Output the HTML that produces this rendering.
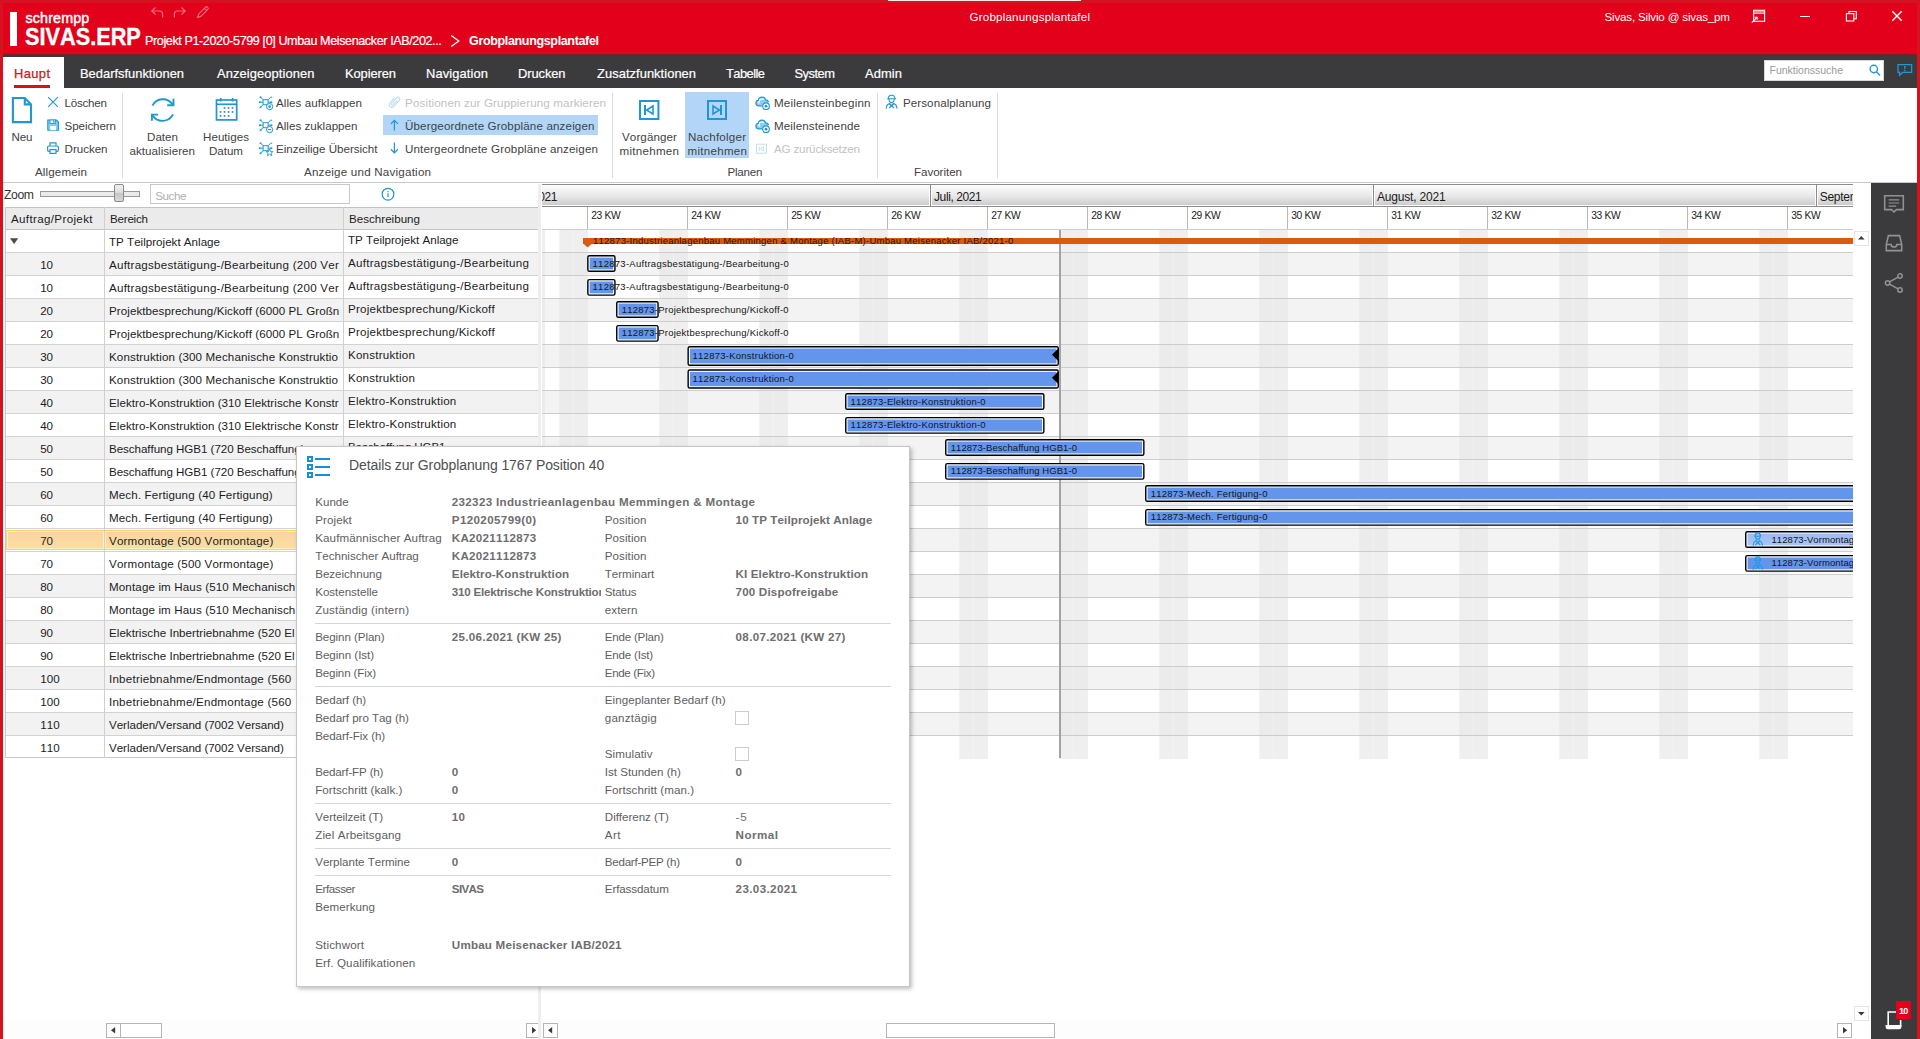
<!DOCTYPE html>
<html lang="de"><head><meta charset="utf-8"><title>Grobplanungsplantafel</title>
<style>
html,body{margin:0;padding:0;}
body{width:1920px;height:1039px;overflow:hidden;position:relative;background:#fff;font-family:"Liberation Sans",sans-serif;font-kerning:none;}
#app{position:absolute;left:0;top:0;width:1920px;height:1039px;overflow:hidden;}
#app div{position:absolute;box-sizing:border-box;}
#app svg{position:absolute;overflow:visible;}
.t{position:absolute;white-space:nowrap;display:block;}
</style></head><body><div id="app">
<div style="left:0px;top:0px;width:1920px;height:54px;background:#e2001a;"></div>
<div style="left:9.8px;top:12.2px;width:7.5px;height:33.5px;background:#fff;"></div>
<span class="t" style="left:25.60px;top:7px;font-size:14.3px;line-height:23px;color:#fff;letter-spacing:0.117px;-webkit-text-stroke:0.45px #fff;">schrempp</span>
<span class="t" style="left:24.60px;top:19px;font-size:23.3px;line-height:37px;color:#fff;font-weight:700;transform-origin:0 50%;transform:scaleX(0.9316);-webkit-text-stroke:0.35px #fff;">SIVAS.ERP</span>
<span class="t" style="left:145.00px;top:31px;font-size:12.6px;line-height:20px;color:#fff;letter-spacing:-0.404px;-webkit-text-stroke:0.2px #fff;">Projekt P1-2020-5799 [0] Umbau Meisenacker IAB/202...</span>
<svg style="left:449px;top:33px" width="14" height="16" viewBox="0 0 14 16" ><polyline points="2.2,2.5 9.8,8 2.2,13.5" fill="none" stroke="#fff" stroke-width="1.3"/></svg>
<span class="t" style="left:469.00px;top:31px;font-size:12.6px;line-height:20px;color:#fff;font-weight:700;letter-spacing:-0.392px;">Grobplanungsplantafel</span>
<svg style="left:150px;top:5px" width="62" height="15" viewBox="0 0 62 15" ><g fill="none" stroke="rgba(255,255,255,0.42)" stroke-width="1.2">
<path d="M5.5 2.5 L1.8 6 L5.5 9.5 M1.8 6 H9.5 Q12.6 6 12.6 9 V12.5"/>
<path d="M31.5 2.5 L35.2 6 L31.5 9.5 M35.2 6 H27.5 Q24.4 6 24.4 9 V12.5"/>
<path d="M47.6 12.4 L48.6 9.2 L55.6 2.2 Q56.6 1.2 57.7 2.3 Q58.8 3.4 57.8 4.4 L50.8 11.4 Z M54.4 3.4 L56.6 5.6"/>
</g></svg>
<span class="t" style="left:969.50px;top:7px;font-size:11.6px;line-height:19px;color:#fff;letter-spacing:0.191px;">Grobplanungsplantafel</span>
<span class="t" style="left:1604.50px;top:7px;font-size:11.6px;line-height:19px;color:#fff;letter-spacing:-0.182px;">Sivas, Silvio @ sivas_pm</span>
<svg style="left:1750px;top:8px" width="18" height="17" viewBox="0 0 18 17" ><g fill="none" stroke="#fff" stroke-width="1.1">
<rect x="3.6" y="2.3" width="11" height="11"/><path d="M3.6 5.2 H14.6" stroke-width="1"/><path d="M1.8 14.6 L7 9.4 M4.6 9.2 H7.2 V11.8"/></g>
<rect x="4.2" y="2.9" width="9.8" height="1.6" fill="#fff" fill-opacity="0.55"/></svg>
<div style="left:1800px;top:15.6px;width:10px;height:1.4px;background:#fff;"></div>
<svg style="left:1844px;top:9px" width="14" height="14" viewBox="0 0 14 14" ><g fill="none" stroke="#fff" stroke-width="1.1"><rect x="2.4" y="4.6" width="7.4" height="7.4"/><path d="M4.9 4.6 V2.5 H12.3 V9.8 H9.8"/></g></svg>
<svg style="left:1890px;top:9px" width="14" height="14" viewBox="0 0 14 14" ><path d="M2.3 2.3 L11.7 11.7 M11.7 2.3 L2.3 11.7" stroke="#fff" stroke-width="1.4" fill="none"/></svg>
<div style="left:0px;top:0px;width:3px;height:1039px;background:#d5121f;"></div>
<div style="left:1917px;top:0px;width:3px;height:1039px;background:#d5121f;"></div>
<div style="left:0px;top:0px;width:1920px;height:2.5px;background:#d5121f;"></div>
<div style="left:888px;top:0px;width:193px;height:1px;background:#fbe6e8;"></div>
<div style="left:3px;top:54px;width:1914px;height:34px;background:#3b3b3d;"></div>
<div style="left:3px;top:54px;width:1914px;height:1px;background:#74202c;"></div>
<div style="left:3px;top:57px;width:61px;height:31px;background:#fff;"></div>
<span class="t" style="left:14.00px;top:63px;font-size:12.9px;line-height:21px;color:#cf1322;letter-spacing:0.398px;-webkit-text-stroke:0.25px #cf1322;">Haupt</span>
<div style="left:14px;top:85px;width:36px;height:2.5px;background:#cf1322;"></div>
<span class="t" style="left:80.00px;top:63px;font-size:12.9px;line-height:21px;color:#fff;letter-spacing:0.005px;-webkit-text-stroke:0.2px #fff;">Bedarfsfunktionen</span>
<span class="t" style="left:217.00px;top:63px;font-size:12.9px;line-height:21px;color:#fff;letter-spacing:0.104px;-webkit-text-stroke:0.2px #fff;">Anzeigeoptionen</span>
<span class="t" style="left:345.00px;top:63px;font-size:12.9px;line-height:21px;color:#fff;letter-spacing:-0.087px;-webkit-text-stroke:0.2px #fff;">Kopieren</span>
<span class="t" style="left:426.00px;top:63px;font-size:12.9px;line-height:21px;color:#fff;letter-spacing:0.120px;-webkit-text-stroke:0.2px #fff;">Navigation</span>
<span class="t" style="left:518.00px;top:63px;font-size:12.9px;line-height:21px;color:#fff;letter-spacing:-0.083px;-webkit-text-stroke:0.2px #fff;">Drucken</span>
<span class="t" style="left:597.00px;top:63px;font-size:12.9px;line-height:21px;color:#fff;letter-spacing:0.055px;-webkit-text-stroke:0.2px #fff;">Zusatzfunktionen</span>
<span class="t" style="left:726.00px;top:63px;font-size:12.9px;line-height:21px;color:#fff;letter-spacing:-0.547px;-webkit-text-stroke:0.2px #fff;">Tabelle</span>
<span class="t" style="left:794.50px;top:63px;font-size:12.9px;line-height:21px;color:#fff;letter-spacing:-0.497px;-webkit-text-stroke:0.2px #fff;">System</span>
<span class="t" style="left:865.00px;top:63px;font-size:12.9px;line-height:21px;color:#fff;letter-spacing:0.113px;-webkit-text-stroke:0.2px #fff;">Admin</span>
<div style="left:1764px;top:60px;width:120px;height:20.5px;background:#fff;border:1px solid #d8d8d8;"></div>
<span class="t" style="left:1769.50px;top:62px;font-size:10.5px;line-height:17px;color:#9a9a9a;letter-spacing:-0.004px;">Funktionssuche</span>
<svg style="left:1868px;top:63px" width="14" height="14" viewBox="0 0 14 14" ><g fill="none" stroke="#1e97d4" stroke-width="1.4"><circle cx="5.8" cy="6" r="3.7"/><path d="M8.4 8.8 L12 12.4"/></g></svg>
<svg style="left:1896px;top:62px" width="18" height="16" viewBox="0 0 18 16" ><g fill="none" stroke="#1e97d4" stroke-width="1.3"><path d="M2 2.6 H15.6 V10.4 H6.6 L3.6 13.2 V10.4 H2 Z"/></g><rect x="8.1" y="4" width="1.4" height="3.2" fill="#1e97d4"/><rect x="8.1" y="8" width="1.4" height="1.3" fill="#1e97d4"/></svg>
<div style="left:3px;top:88px;width:1914px;height:94px;background:#fff;"></div>
<div style="left:3px;top:182px;width:1914px;height:1px;background:#c9c9c9;"></div>
<div style="left:122px;top:92.5px;width:1px;height:85px;background:#dadada;"></div>
<div style="left:612px;top:92.5px;width:1px;height:85px;background:#dadada;"></div>
<div style="left:877px;top:92.5px;width:1px;height:85px;background:#dadada;"></div>
<div style="left:997px;top:92.5px;width:1px;height:85px;background:#dadada;"></div>
<svg style="left:10px;top:95px" width="24" height="30" viewBox="0 0 24 30" ><g fill="none" stroke="#1e97d4" stroke-width="2.1" stroke-linejoin="miter"><path d="M2.9 3 H14.8 L21 9.4 V27.1 H2.9 Z"/><path d="M14.8 3 V9.4 H21"/></g></svg>
<span class="t" style="left:11.60px;top:127px;font-size:11.6px;line-height:19px;color:#424242;letter-spacing:-0.191px;">Neu</span>
<svg style="left:46px;top:95px" width="14" height="14" viewBox="0 0 14 14" ><path d="M2.2 2.2 L11.8 11.8 M11.8 2.2 L2.2 11.8" stroke="#1e97d4" stroke-width="1.1" fill="none"/></svg>
<span class="t" style="left:64.60px;top:93px;font-size:11.6px;line-height:19px;color:#424242;letter-spacing:-0.241px;">Löschen</span>
<svg style="left:46px;top:118px" width="14" height="14" viewBox="0 0 14 14" ><path d="M1.8 2 H10.4 L12.4 4 V12.2 H1.8 Z" fill="#8ccbee" stroke="#1e97d4" stroke-width="1.1"/>
<rect x="4" y="2" width="5.6" height="3.4" fill="#fff" stroke="#1e97d4" stroke-width="0.9"/><rect x="7.2" y="2.4" width="1.3" height="2.2" fill="#1e97d4"/>
<rect x="4.2" y="8" width="5.8" height="4.2" fill="#fff"/></svg>
<span class="t" style="left:64.60px;top:116px;font-size:11.6px;line-height:19px;color:#424242;letter-spacing:-0.102px;">Speichern</span>
<svg style="left:46px;top:141px" width="14" height="14" viewBox="0 0 14 14" ><g fill="none" stroke="#1e97d4" stroke-width="1.2"><path d="M4 5 V1.9 H10 V5"/><rect x="1.6" y="5" width="10.8" height="5.4" rx="1.3"/><rect x="4" y="8.6" width="6" height="3.8" fill="#fff"/></g></svg>
<span class="t" style="left:64.60px;top:139px;font-size:11.6px;line-height:19px;color:#424242;letter-spacing:-0.045px;">Drucken</span>
<span class="t" style="left:35.00px;top:162px;font-size:11.6px;line-height:19px;color:#424242;letter-spacing:0.135px;">Allgemein</span>
<svg style="left:149px;top:95px" width="28" height="30" viewBox="0 0 28 30" ><g fill="none" stroke="#1e97d4" stroke-width="1.9">
<path d="M3.4 10.7 A11.7 11.7 0 0 1 23.6 9.4"/><path d="M24.5 3.8 V10.3 H18.2"/>
<path d="M24 19.4 A11.8 11.8 0 0 1 3.6 20.5"/><path d="M2.9 25.8 V19.6 H9.2"/></g></svg>
<span class="t" style="left:147.00px;top:127px;font-size:11.6px;line-height:19px;color:#424242;letter-spacing:0.016px;">Daten</span>
<span class="t" style="left:129.50px;top:141px;font-size:11.6px;line-height:19px;color:#424242;letter-spacing:0.034px;">aktualisieren</span>
<svg style="left:214px;top:96px" width="26" height="27" viewBox="0 0 26 27" ><g fill="none" stroke="#1e97d4" stroke-width="1.7"><rect x="2.5" y="4" width="20.2" height="19.9"/><path d="M2.5 8.3 H22.7"/></g>
<g stroke="#1e97d4" stroke-width="1.7"><path d="M6.7 1.9 V5.4 M18.6 1.9 V5.4"/></g><rect x="9.70" y="11.10" width="1.7" height="1.7" fill="#3f86b3"/><rect x="13.70" y="11.10" width="1.7" height="1.7" fill="#3f86b3"/><rect x="17.70" y="11.10" width="1.7" height="1.7" fill="#3f86b3"/><rect x="5.70" y="15.10" width="1.7" height="1.7" fill="#3f86b3"/><rect x="9.70" y="15.10" width="1.7" height="1.7" fill="#3f86b3"/><rect x="13.70" y="15.10" width="1.7" height="1.7" fill="#3f86b3"/><rect x="17.70" y="15.10" width="1.7" height="1.7" fill="#3f86b3"/><rect x="5.70" y="19.10" width="1.7" height="1.7" fill="#3f86b3"/><rect x="9.70" y="19.10" width="1.7" height="1.7" fill="#3f86b3"/><rect x="13.70" y="19.10" width="1.7" height="1.7" fill="#3f86b3"/></svg>
<span class="t" style="left:203.00px;top:127px;font-size:11.6px;line-height:19px;color:#424242;letter-spacing:0.033px;">Heutiges</span>
<span class="t" style="left:209.00px;top:141px;font-size:11.6px;line-height:19px;color:#424242;letter-spacing:-0.039px;">Datum</span>
<svg style="left:258.6px;top:96px" width="15" height="15" viewBox="0 0 15 15" ><g fill="none" stroke="#1e97d4" stroke-width="1"><rect x="4.1" y="3.7" width="5" height="5"/>
<path d="M4.1 3.7 L1.6 1.2 M9.1 3.7 L11.6 1.2 M4.1 8.7 L1.6 11.2 M4.1 6.2 H0.8 M9.1 6.2 H12.4 M11.6 1.2 H13.2"/></g>
<g fill="#1e97d4"><rect x="0.7" y="0.4" width="1.7" height="1.7"/><rect x="0" y="5.4" width="1.7" height="1.7"/><rect x="0.7" y="10.4" width="1.7" height="1.7"/><rect x="11.6" y="5.4" width="1.7" height="1.7"/></g><circle cx="10.6" cy="10.6" r="3.1" fill="#fff" stroke="#1e97d4" stroke-width="1"/><circle cx="10.6" cy="10.6" r="1.3" fill="#1e97d4"/></svg>
<span class="t" style="left:276.00px;top:93px;font-size:11.6px;line-height:19px;color:#424242;letter-spacing:0.060px;">Alles aufklappen</span>
<svg style="left:258.6px;top:119px" width="15" height="15" viewBox="0 0 15 15" ><g fill="none" stroke="#1e97d4" stroke-width="1"><rect x="4.1" y="3.7" width="5" height="5"/>
<path d="M4.1 3.7 L1.6 1.2 M9.1 3.7 L11.6 1.2 M4.1 8.7 L1.6 11.2 M4.1 6.2 H0.8 M9.1 6.2 H12.4 M11.6 1.2 H13.2"/></g>
<g fill="#1e97d4"><rect x="0.7" y="0.4" width="1.7" height="1.7"/><rect x="0" y="5.4" width="1.7" height="1.7"/><rect x="0.7" y="10.4" width="1.7" height="1.7"/><rect x="11.6" y="5.4" width="1.7" height="1.7"/></g><circle cx="10.6" cy="10.6" r="3.1" fill="#fff" stroke="#1e97d4" stroke-width="1"/><path d="M9 10.6 H12.2" stroke="#1e97d4" stroke-width="1.1"/></svg>
<span class="t" style="left:276.00px;top:116px;font-size:11.6px;line-height:19px;color:#424242;letter-spacing:0.020px;">Alles zuklappen</span>
<svg style="left:258.6px;top:142px" width="15" height="15" viewBox="0 0 15 15" ><g fill="none" stroke="#1e97d4" stroke-width="1"><rect x="4.1" y="3.7" width="5" height="5"/>
<path d="M4.1 3.7 L1.6 1.2 M9.1 3.7 L11.6 1.2 M4.1 8.7 L1.6 11.2 M4.1 6.2 H0.8 M9.1 6.2 H12.4 M11.6 1.2 H13.2"/></g>
<g fill="#1e97d4"><rect x="0.7" y="0.4" width="1.7" height="1.7"/><rect x="0" y="5.4" width="1.7" height="1.7"/><rect x="0.7" y="10.4" width="1.7" height="1.7"/><rect x="11.6" y="5.4" width="1.7" height="1.7"/></g><path d="M10.6 7 L11.6 9.5 L14 9.6 L12.1 11.2 L12.8 13.8 L10.6 12.3 L8.4 13.8 L9.1 11.2 L7.2 9.6 L9.6 9.5 Z" fill="#fff" stroke="#1e97d4" stroke-width="0.9"/></svg>
<span class="t" style="left:276.00px;top:139px;font-size:11.6px;line-height:19px;color:#424242;letter-spacing:-0.017px;">Einzeilige Übersicht</span>
<svg style="left:387px;top:95px" width="14" height="14" viewBox="0 0 14 14" ><g transform="translate(7.2,7) rotate(42) translate(-3.5,-7.2)"><path d="M0.8 4 V10.6 A2.7 2.7 0 0 0 6.2 10.6 V2.6 A1.9 1.9 0 0 0 2.4 2.6 V10 A1.1 1.1 0 0 0 4.6 10 V4" fill="none" stroke="#b9dbf0" stroke-width="1"/></g></svg>
<span class="t" style="left:405.00px;top:93px;font-size:11.6px;line-height:19px;color:#c2c2c2;letter-spacing:0.146px;">Positionen zur Gruppierung markieren</span>
<div style="left:383px;top:115px;width:214.6px;height:20px;background:#b1d6f8;"></div>
<svg style="left:389px;top:118px" width="12" height="14" viewBox="0 0 12 14" ><path d="M5.4 12.6 V2.4 M1.9 5.9 L5.4 2.3 L8.9 5.9" fill="none" stroke="#1e97d4" stroke-width="1.25"/></svg>
<span class="t" style="left:405.00px;top:116px;font-size:11.6px;line-height:19px;color:#424242;letter-spacing:0.145px;">Übergeordnete Grobpläne anzeigen</span>
<svg style="left:389px;top:141px" width="12" height="14" viewBox="0 0 12 14" ><path d="M5.4 1.6 V11.8 M1.9 8.3 L5.4 11.9 L8.9 8.3" fill="none" stroke="#1e97d4" stroke-width="1.25"/></svg>
<span class="t" style="left:405.00px;top:139px;font-size:11.6px;line-height:19px;color:#424242;letter-spacing:0.149px;">Untergeordnete Grobpläne anzeigen</span>
<span class="t" style="left:304.00px;top:162px;font-size:11.6px;line-height:19px;color:#424242;letter-spacing:0.216px;">Anzeige und Navigation</span>
<svg style="left:637px;top:98px" width="24" height="24" viewBox="0 0 24 24" ><g fill="none" stroke="#1e97d4"><rect x="3" y="3" width="18.4" height="18" stroke-width="2"/><path d="M8 7 V17" stroke-width="2"/><path d="M16 8 L9.6 12 L16 16 Z" stroke-width="1.6"/></g></svg>
<span class="t" style="left:622.00px;top:127px;font-size:11.6px;line-height:19px;color:#424242;letter-spacing:0.105px;">Vorgänger</span>
<span class="t" style="left:619.50px;top:141px;font-size:11.6px;line-height:19px;color:#424242;letter-spacing:0.268px;">mitnehmen</span>
<div style="left:684.5px;top:92px;width:64.5px;height:66px;background:#b3d6f8;"></div>
<svg style="left:705px;top:98px" width="24" height="24" viewBox="0 0 24 24" ><g fill="none" stroke="#1e97d4"><rect x="3" y="3" width="18" height="18" stroke-width="2"/><path d="M16 7 V17" stroke-width="2"/><path d="M8 8 L14.4 12 L8 16 Z" stroke-width="1.6"/></g></svg>
<span class="t" style="left:688.00px;top:127px;font-size:11.6px;line-height:19px;color:#424242;letter-spacing:0.214px;">Nachfolger</span>
<span class="t" style="left:687.50px;top:141px;font-size:11.6px;line-height:19px;color:#424242;letter-spacing:0.268px;">mitnehmen</span>
<svg style="left:755px;top:96px" width="16" height="15" viewBox="0 0 16 15" ><path d="M8 9.8 H3.6 Q0.9 9.8 0.9 7 Q0.9 4.6 3.3 4.4 Q3.9 1.1 7 1.1 Q9.8 1.1 10.6 3.8 Q13.2 3.8 13.6 7 Z" fill="#8fcdf0"/><path d="M4 7.6 V5.6 Q4 3.2 6.4 3.2 H9" fill="none" stroke="#fff" stroke-width="1.3"/><g fill="none" stroke="#1e97d4" stroke-width="1.15"><path d="M7.2 9.8 H3.6 Q0.9 9.8 0.9 7 Q0.9 4.6 3.3 4.4 Q3.9 1.1 7 1.1 Q9.8 1.1 10.6 3.8 Q13 3.8 13.4 6"/><circle cx="11" cy="10.2" r="3.3" fill="#fff"/></g><circle cx="11" cy="10.2" r="1.4" fill="#1e97d4"/></svg>
<span class="t" style="left:774.00px;top:93px;font-size:11.6px;line-height:19px;color:#424242;letter-spacing:0.189px;">Meilensteinbeginn</span>
<svg style="left:755px;top:119px" width="16" height="15" viewBox="0 0 16 15" ><path d="M8 9.8 H3.6 Q0.9 9.8 0.9 7 Q0.9 4.6 3.3 4.4 Q3.9 1.1 7 1.1 Q9.8 1.1 10.6 3.8 Q13.2 3.8 13.6 7 Z" fill="#8fcdf0"/><path d="M4 7.6 V5.6 Q4 3.2 6.4 3.2 H9" fill="none" stroke="#fff" stroke-width="1.3"/><g fill="none" stroke="#1e97d4" stroke-width="1.15"><path d="M7.2 9.8 H3.6 Q0.9 9.8 0.9 7 Q0.9 4.6 3.3 4.4 Q3.9 1.1 7 1.1 Q9.8 1.1 10.6 3.8 Q13 3.8 13.4 6"/><circle cx="11" cy="10.2" r="3.3" fill="#fff"/></g><circle cx="11" cy="10.2" r="1.4" fill="#1e97d4"/></svg>
<span class="t" style="left:774.00px;top:116px;font-size:11.6px;line-height:19px;color:#424242;letter-spacing:0.112px;">Meilensteinende</span>
<svg style="left:755px;top:143px" width="13" height="12" viewBox="0 0 13 12" ><g fill="none" stroke="#c3def0" stroke-width="1"><rect x="1.5" y="1.2" width="10" height="9"/><path d="M4.2 3.6 V8 M8.6 3.6 L5.4 5.8 L8.6 8 Z"/></g></svg>
<span class="t" style="left:774.00px;top:139px;font-size:11.6px;line-height:19px;color:#c2c2c2;letter-spacing:-0.163px;">AG zurücksetzen</span>
<span class="t" style="left:727.50px;top:162px;font-size:11.6px;line-height:19px;color:#424242;letter-spacing:-0.222px;">Planen</span>
<svg style="left:885px;top:94px" width="14" height="16" viewBox="0 0 14 16" ><g fill="none" stroke="#1e97d4" stroke-width="1.1"><path d="M3.3 4.6 Q3.3 1.2 6.6 1.2 Q9.9 1.2 9.9 4.6"/><path d="M2.2 4.8 H11"/><path d="M4 5 Q4 8.6 6.6 8.6 Q9.2 8.6 9.2 5"/><path d="M1.2 14.6 Q1.4 10.4 4.6 9.6 L6.6 12 L8.6 9.6 Q11.8 10.4 12 14.6"/><path d="M4.4 9.4 L9 14 M8.8 9.4 L4.2 14"/></g></svg>
<span class="t" style="left:903.00px;top:93px;font-size:11.6px;line-height:19px;color:#424242;letter-spacing:0.069px;">Personalplanung</span>
<span class="t" style="left:914.00px;top:162px;font-size:11.6px;line-height:19px;color:#424242;letter-spacing:-0.041px;">Favoriten</span>
<span class="t" style="left:4.00px;top:185px;font-size:12.2px;line-height:20px;color:#333;letter-spacing:-0.385px;">Zoom</span>
<div style="left:40px;top:191px;width:100px;height:6px;background:#ebebeb;border:1px solid #9a9a9a;"></div>
<div style="left:114px;top:184px;width:10px;height:18px;border:1px solid #8c8c8c;border-radius:2px;background:linear-gradient(180deg,#f2f2f2 0%,#dcdcdc 48%,#c6c6c6 52%,#d9d9d9 100%);"></div>
<div style="left:150px;top:184px;width:199.5px;height:19.5px;background:#fff;border:1px solid #c8c8c8;"></div>
<span class="t" style="left:155.30px;top:186px;font-size:11.7px;line-height:19px;color:#b0b0b0;letter-spacing:-0.485px;">Suche</span>
<svg style="left:380px;top:186px" width="16" height="16" viewBox="0 0 16 16" ><circle cx="8" cy="8.2" r="5.9" fill="none" stroke="#1e97d4" stroke-width="1.15"/><rect x="7.45" y="7.2" width="1.15" height="4" fill="#1e97d4"/><rect x="7.45" y="5" width="1.15" height="1.2" fill="#1e97d4"/></svg>
<div style="left:5px;top:207px;width:533px;height:23px;background:#ebebeb;border-top:1px solid #c2c2c2;border-bottom:1px solid #c6c6c6;"></div>
<span class="t" style="left:11.00px;top:209px;font-size:11.6px;line-height:19px;color:#1c1c1c;letter-spacing:0.344px;">Auftrag/Projekt</span>
<span class="t" style="left:110.00px;top:209px;font-size:11.6px;line-height:19px;color:#1c1c1c;letter-spacing:-0.219px;">Bereich</span>
<span class="t" style="left:349.00px;top:209px;font-size:11.6px;line-height:19px;color:#1c1c1c;letter-spacing:0.009px;">Beschreibung</span>
<div style="left:5px;top:230px;width:533px;height:23px;background:#fff;border-bottom:1px solid #d2d2d2;"></div>
<span class="t" style="left:109.00px;top:232px;font-size:11.6px;line-height:19px;color:#1c1c1c;letter-spacing:0.008px;width:230.5px;overflow:hidden;">TP Teilprojekt Anlage</span>
<span class="t" style="left:348.00px;top:230px;font-size:11.6px;line-height:19px;color:#1c1c1c;letter-spacing:-0.017px;width:188px;overflow:hidden;">TP Teilprojekt Anlage</span>
<div style="left:5px;top:253px;width:533px;height:23px;background:#f2f2f2;border-bottom:1px solid #d2d2d2;"></div>
<span class="t" style="left:40.30px;top:255px;font-size:11.6px;line-height:19px;color:#1c1c1c;letter-spacing:-0.306px;">10</span>
<span class="t" style="left:109.00px;top:255px;font-size:11.6px;line-height:19px;color:#1c1c1c;letter-spacing:0.234px;width:230.5px;overflow:hidden;">Auftragsbestätigung-/Bearbeitung (200 Ver</span>
<span class="t" style="left:348.00px;top:253px;font-size:11.6px;line-height:19px;color:#1c1c1c;letter-spacing:0.266px;width:188px;overflow:hidden;">Auftragsbestätigung-/Bearbeitung</span>
<div style="left:5px;top:276px;width:533px;height:23px;background:#fff;border-bottom:1px solid #d2d2d2;"></div>
<span class="t" style="left:40.30px;top:278px;font-size:11.6px;line-height:19px;color:#1c1c1c;letter-spacing:-0.306px;">10</span>
<span class="t" style="left:109.00px;top:278px;font-size:11.6px;line-height:19px;color:#1c1c1c;letter-spacing:0.234px;width:230.5px;overflow:hidden;">Auftragsbestätigung-/Bearbeitung (200 Ver</span>
<span class="t" style="left:348.00px;top:276px;font-size:11.6px;line-height:19px;color:#1c1c1c;letter-spacing:0.266px;width:188px;overflow:hidden;">Auftragsbestätigung-/Bearbeitung</span>
<div style="left:5px;top:299px;width:533px;height:23px;background:#f2f2f2;border-bottom:1px solid #d2d2d2;"></div>
<span class="t" style="left:40.30px;top:301px;font-size:11.6px;line-height:19px;color:#1c1c1c;letter-spacing:-0.306px;">20</span>
<span class="t" style="left:109.00px;top:301px;font-size:11.6px;line-height:19px;color:#1c1c1c;letter-spacing:0.070px;width:230.5px;overflow:hidden;">Projektbesprechung/Kickoff (6000 PL Großn</span>
<span class="t" style="left:348.00px;top:299px;font-size:11.6px;line-height:19px;color:#1c1c1c;letter-spacing:0.226px;width:188px;overflow:hidden;">Projektbesprechung/Kickoff</span>
<div style="left:5px;top:322px;width:533px;height:23px;background:#fff;border-bottom:1px solid #d2d2d2;"></div>
<span class="t" style="left:40.30px;top:324px;font-size:11.6px;line-height:19px;color:#1c1c1c;letter-spacing:-0.306px;">20</span>
<span class="t" style="left:109.00px;top:324px;font-size:11.6px;line-height:19px;color:#1c1c1c;letter-spacing:0.070px;width:230.5px;overflow:hidden;">Projektbesprechung/Kickoff (6000 PL Großn</span>
<span class="t" style="left:348.00px;top:322px;font-size:11.6px;line-height:19px;color:#1c1c1c;letter-spacing:0.226px;width:188px;overflow:hidden;">Projektbesprechung/Kickoff</span>
<div style="left:5px;top:345px;width:533px;height:23px;background:#f2f2f2;border-bottom:1px solid #d2d2d2;"></div>
<span class="t" style="left:40.30px;top:347px;font-size:11.6px;line-height:19px;color:#1c1c1c;letter-spacing:-0.306px;">30</span>
<span class="t" style="left:109.00px;top:347px;font-size:11.6px;line-height:19px;color:#1c1c1c;letter-spacing:0.134px;width:230.5px;overflow:hidden;">Konstruktion (300 Mechanische Konstruktio</span>
<span class="t" style="left:348.00px;top:345px;font-size:11.6px;line-height:19px;color:#1c1c1c;letter-spacing:0.222px;width:188px;overflow:hidden;">Konstruktion</span>
<div style="left:5px;top:368px;width:533px;height:23px;background:#fff;border-bottom:1px solid #d2d2d2;"></div>
<span class="t" style="left:40.30px;top:370px;font-size:11.6px;line-height:19px;color:#1c1c1c;letter-spacing:-0.306px;">30</span>
<span class="t" style="left:109.00px;top:370px;font-size:11.6px;line-height:19px;color:#1c1c1c;letter-spacing:0.134px;width:230.5px;overflow:hidden;">Konstruktion (300 Mechanische Konstruktio</span>
<span class="t" style="left:348.00px;top:368px;font-size:11.6px;line-height:19px;color:#1c1c1c;letter-spacing:0.222px;width:188px;overflow:hidden;">Konstruktion</span>
<div style="left:5px;top:391px;width:533px;height:23px;background:#f2f2f2;border-bottom:1px solid #d2d2d2;"></div>
<span class="t" style="left:40.30px;top:393px;font-size:11.6px;line-height:19px;color:#1c1c1c;letter-spacing:-0.306px;">40</span>
<span class="t" style="left:109.00px;top:393px;font-size:11.6px;line-height:19px;color:#1c1c1c;letter-spacing:0.050px;width:230.5px;overflow:hidden;">Elektro-Konstruktion (310 Elektrische Konstr</span>
<span class="t" style="left:348.00px;top:391px;font-size:11.6px;line-height:19px;color:#1c1c1c;letter-spacing:0.206px;width:188px;overflow:hidden;">Elektro-Konstruktion</span>
<div style="left:5px;top:414px;width:533px;height:23px;background:#fff;border-bottom:1px solid #d2d2d2;"></div>
<span class="t" style="left:40.30px;top:416px;font-size:11.6px;line-height:19px;color:#1c1c1c;letter-spacing:-0.306px;">40</span>
<span class="t" style="left:109.00px;top:416px;font-size:11.6px;line-height:19px;color:#1c1c1c;letter-spacing:0.050px;width:230.5px;overflow:hidden;">Elektro-Konstruktion (310 Elektrische Konstr</span>
<span class="t" style="left:348.00px;top:414px;font-size:11.6px;line-height:19px;color:#1c1c1c;letter-spacing:0.206px;width:188px;overflow:hidden;">Elektro-Konstruktion</span>
<div style="left:5px;top:437px;width:533px;height:23px;background:#f2f2f2;border-bottom:1px solid #d2d2d2;"></div>
<span class="t" style="left:40.30px;top:439px;font-size:11.6px;line-height:19px;color:#1c1c1c;letter-spacing:-0.306px;">50</span>
<span class="t" style="left:109.00px;top:439px;font-size:11.6px;line-height:19px;color:#1c1c1c;letter-spacing:-0.052px;width:230.5px;overflow:hidden;">Beschaffung HGB1 (720 Beschaffung)</span>
<span class="t" style="left:348.00px;top:437px;font-size:11.6px;line-height:19px;color:#1c1c1c;letter-spacing:-0.117px;width:188px;overflow:hidden;">Beschaffung HGB1</span>
<div style="left:5px;top:460px;width:533px;height:23px;background:#fff;border-bottom:1px solid #d2d2d2;"></div>
<span class="t" style="left:40.30px;top:462px;font-size:11.6px;line-height:19px;color:#1c1c1c;letter-spacing:-0.306px;">50</span>
<span class="t" style="left:109.00px;top:462px;font-size:11.6px;line-height:19px;color:#1c1c1c;letter-spacing:-0.052px;width:230.5px;overflow:hidden;">Beschaffung HGB1 (720 Beschaffung)</span>
<span class="t" style="left:348.00px;top:460px;font-size:11.6px;line-height:19px;color:#1c1c1c;letter-spacing:-0.117px;width:188px;overflow:hidden;">Beschaffung HGB1</span>
<div style="left:5px;top:483px;width:533px;height:23px;background:#f2f2f2;border-bottom:1px solid #d2d2d2;"></div>
<span class="t" style="left:40.30px;top:485px;font-size:11.6px;line-height:19px;color:#1c1c1c;letter-spacing:-0.306px;">60</span>
<span class="t" style="left:109.00px;top:485px;font-size:11.6px;line-height:19px;color:#1c1c1c;letter-spacing:0.134px;width:230.5px;overflow:hidden;">Mech. Fertigung (40 Fertigung)</span>
<span class="t" style="left:348.00px;top:483px;font-size:11.6px;line-height:19px;color:#1c1c1c;letter-spacing:-0.270px;width:188px;overflow:hidden;">Mech. Fertigung</span>
<div style="left:5px;top:506px;width:533px;height:23px;background:#fff;border-bottom:1px solid #d2d2d2;"></div>
<span class="t" style="left:40.30px;top:508px;font-size:11.6px;line-height:19px;color:#1c1c1c;letter-spacing:-0.306px;">60</span>
<span class="t" style="left:109.00px;top:508px;font-size:11.6px;line-height:19px;color:#1c1c1c;letter-spacing:0.134px;width:230.5px;overflow:hidden;">Mech. Fertigung (40 Fertigung)</span>
<span class="t" style="left:348.00px;top:506px;font-size:11.6px;line-height:19px;color:#1c1c1c;letter-spacing:-0.270px;width:188px;overflow:hidden;">Mech. Fertigung</span>
<div style="left:5px;top:529px;width:533px;height:23px;background:#fff;border-bottom:1px solid #d2d2d2;"></div>
<div style="left:6px;top:530px;width:99px;height:20px;background:linear-gradient(180deg,#fbd2a2,#fadf9f);border:1px solid #f1d56c;box-shadow:inset 0 0 0 1px rgba(255,244,200,0.75);"></div>
<div style="left:104px;top:530px;width:240px;height:20px;background:linear-gradient(180deg,#fbd2a2,#fadf9f);border:1px solid #f1d56c;box-shadow:inset 0 0 0 1px rgba(255,244,200,0.75);"></div>
<div style="left:343px;top:530px;width:195px;height:20px;background:linear-gradient(180deg,#fbd2a2,#fadf9f);border:1px solid #f1d56c;box-shadow:inset 0 0 0 1px rgba(255,244,200,0.75);"></div>
<span class="t" style="left:40.30px;top:531px;font-size:11.6px;line-height:19px;color:#1c1c1c;letter-spacing:-0.306px;">70</span>
<span class="t" style="left:109.00px;top:531px;font-size:11.6px;line-height:19px;color:#1c1c1c;letter-spacing:0.172px;width:230.5px;overflow:hidden;">Vormontage (500 Vormontage)</span>
<span class="t" style="left:348.00px;top:529px;font-size:11.6px;line-height:19px;color:#1c1c1c;letter-spacing:-0.270px;width:188px;overflow:hidden;">Vormontage</span>
<div style="left:5px;top:552px;width:533px;height:23px;background:#fff;border-bottom:1px solid #d2d2d2;"></div>
<span class="t" style="left:40.30px;top:554px;font-size:11.6px;line-height:19px;color:#1c1c1c;letter-spacing:-0.306px;">70</span>
<span class="t" style="left:109.00px;top:554px;font-size:11.6px;line-height:19px;color:#1c1c1c;letter-spacing:0.172px;width:230.5px;overflow:hidden;">Vormontage (500 Vormontage)</span>
<span class="t" style="left:348.00px;top:552px;font-size:11.6px;line-height:19px;color:#1c1c1c;letter-spacing:-0.270px;width:188px;overflow:hidden;">Vormontage</span>
<div style="left:5px;top:575px;width:533px;height:23px;background:#f2f2f2;border-bottom:1px solid #d2d2d2;"></div>
<span class="t" style="left:40.30px;top:577px;font-size:11.6px;line-height:19px;color:#1c1c1c;letter-spacing:-0.306px;">80</span>
<span class="t" style="left:109.00px;top:577px;font-size:11.6px;line-height:19px;color:#1c1c1c;letter-spacing:0.131px;width:230.5px;overflow:hidden;">Montage im Haus (510 Mechanisch</span>
<span class="t" style="left:348.00px;top:575px;font-size:11.6px;line-height:19px;color:#1c1c1c;letter-spacing:-0.270px;width:188px;overflow:hidden;">Montage im Haus</span>
<div style="left:5px;top:598px;width:533px;height:23px;background:#fff;border-bottom:1px solid #d2d2d2;"></div>
<span class="t" style="left:40.30px;top:600px;font-size:11.6px;line-height:19px;color:#1c1c1c;letter-spacing:-0.306px;">80</span>
<span class="t" style="left:109.00px;top:600px;font-size:11.6px;line-height:19px;color:#1c1c1c;letter-spacing:0.131px;width:230.5px;overflow:hidden;">Montage im Haus (510 Mechanisch</span>
<span class="t" style="left:348.00px;top:598px;font-size:11.6px;line-height:19px;color:#1c1c1c;letter-spacing:-0.270px;width:188px;overflow:hidden;">Montage im Haus</span>
<div style="left:5px;top:621px;width:533px;height:23px;background:#f2f2f2;border-bottom:1px solid #d2d2d2;"></div>
<span class="t" style="left:40.30px;top:623px;font-size:11.6px;line-height:19px;color:#1c1c1c;letter-spacing:-0.306px;">90</span>
<span class="t" style="left:109.00px;top:623px;font-size:11.6px;line-height:19px;color:#1c1c1c;letter-spacing:0.038px;width:230.5px;overflow:hidden;">Elektrische Inbertriebnahme (520 El</span>
<span class="t" style="left:348.00px;top:621px;font-size:11.6px;line-height:19px;color:#1c1c1c;letter-spacing:-0.270px;width:188px;overflow:hidden;">Elektrische Inbertriebnahme</span>
<div style="left:5px;top:644px;width:533px;height:23px;background:#fff;border-bottom:1px solid #d2d2d2;"></div>
<span class="t" style="left:40.30px;top:646px;font-size:11.6px;line-height:19px;color:#1c1c1c;letter-spacing:-0.306px;">90</span>
<span class="t" style="left:109.00px;top:646px;font-size:11.6px;line-height:19px;color:#1c1c1c;letter-spacing:0.038px;width:230.5px;overflow:hidden;">Elektrische Inbertriebnahme (520 El</span>
<span class="t" style="left:348.00px;top:644px;font-size:11.6px;line-height:19px;color:#1c1c1c;letter-spacing:-0.270px;width:188px;overflow:hidden;">Elektrische Inbertriebnahme</span>
<div style="left:5px;top:667px;width:533px;height:23px;background:#f2f2f2;border-bottom:1px solid #d2d2d2;"></div>
<span class="t" style="left:40.30px;top:669px;font-size:11.6px;line-height:19px;color:#1c1c1c;letter-spacing:-0.022px;">100</span>
<span class="t" style="left:109.00px;top:669px;font-size:11.6px;line-height:19px;color:#1c1c1c;letter-spacing:0.218px;width:230.5px;overflow:hidden;">Inbetriebnahme/Endmontage (560</span>
<span class="t" style="left:348.00px;top:667px;font-size:11.6px;line-height:19px;color:#1c1c1c;letter-spacing:-0.270px;width:188px;overflow:hidden;">Inbetriebnahme/Endmontage</span>
<div style="left:5px;top:690px;width:533px;height:23px;background:#fff;border-bottom:1px solid #d2d2d2;"></div>
<span class="t" style="left:40.30px;top:692px;font-size:11.6px;line-height:19px;color:#1c1c1c;letter-spacing:-0.022px;">100</span>
<span class="t" style="left:109.00px;top:692px;font-size:11.6px;line-height:19px;color:#1c1c1c;letter-spacing:0.218px;width:230.5px;overflow:hidden;">Inbetriebnahme/Endmontage (560</span>
<span class="t" style="left:348.00px;top:690px;font-size:11.6px;line-height:19px;color:#1c1c1c;letter-spacing:-0.270px;width:188px;overflow:hidden;">Inbetriebnahme/Endmontage</span>
<div style="left:5px;top:713px;width:533px;height:23px;background:#f2f2f2;border-bottom:1px solid #d2d2d2;"></div>
<span class="t" style="left:40.30px;top:715px;font-size:11.6px;line-height:19px;color:#1c1c1c;letter-spacing:-0.022px;">110</span>
<span class="t" style="left:109.00px;top:715px;font-size:11.6px;line-height:19px;color:#1c1c1c;letter-spacing:-0.038px;width:230.5px;overflow:hidden;">Verladen/Versand (7002 Versand)</span>
<span class="t" style="left:348.00px;top:713px;font-size:11.6px;line-height:19px;color:#1c1c1c;letter-spacing:-0.270px;width:188px;overflow:hidden;">Verladen/Versand</span>
<div style="left:5px;top:736px;width:533px;height:22px;background:#fff;border-bottom:1px solid #c8c8c8;"></div>
<span class="t" style="left:40.30px;top:738px;font-size:11.6px;line-height:19px;color:#1c1c1c;letter-spacing:-0.022px;">110</span>
<span class="t" style="left:109.00px;top:738px;font-size:11.6px;line-height:19px;color:#1c1c1c;letter-spacing:-0.038px;width:230.5px;overflow:hidden;">Verladen/Versand (7002 Versand)</span>
<span class="t" style="left:348.00px;top:736px;font-size:11.6px;line-height:19px;color:#1c1c1c;letter-spacing:-0.270px;width:188px;overflow:hidden;">Verladen/Versand</span>
<svg style="left:8px;top:236px" width="12" height="10" viewBox="0 0 12 10" ><path d="M2 2.2 H10.2 L6.1 8 Z" fill="#4a4a4a"/></svg>
<div style="left:5px;top:207px;width:1px;height:551px;background:#cbcbcb;"></div>
<div style="left:104px;top:207px;width:1px;height:551px;background:#d0d0d0;"></div>
<div style="left:343px;top:207px;width:1px;height:551px;background:#d0d0d0;"></div>
<div style="left:538px;top:184px;width:3px;height:855px;background:#eeeeee;"></div>
<svg style="left:0;top:0" width="1920" height="800" viewBox="0 0 1920 800"><defs><clipPath id="gc"><rect x="542" y="183" width="1311" height="600"/></clipPath><linearGradient id="mh" x1="0" y1="0" x2="0" y2="1"><stop offset="0" stop-color="#fbfbfb"/><stop offset="0.5" stop-color="#e9e9e9"/><stop offset="1" stop-color="#cdcdcd"/></linearGradient><linearGradient id="selbar" x1="0" y1="0" x2="0" y2="1"><stop offset="0" stop-color="#9dbcf3"/><stop offset="1" stop-color="#a9c4f5"/></linearGradient></defs><g clip-path="url(#gc)"><rect x="542" y="252" width="1311" height="23" fill="#f3f3f3"/><rect x="542" y="298" width="1311" height="23" fill="#f3f3f3"/><rect x="542" y="344" width="1311" height="23" fill="#f3f3f3"/><rect x="542" y="390" width="1311" height="23" fill="#f3f3f3"/><rect x="542" y="436" width="1311" height="23" fill="#f3f3f3"/><rect x="542" y="482" width="1311" height="23" fill="#f3f3f3"/><rect x="542" y="528" width="1311" height="23" fill="#f3f3f3"/><rect x="542" y="574" width="1311" height="23" fill="#f3f3f3"/><rect x="542" y="620" width="1311" height="23" fill="#f3f3f3"/><rect x="542" y="666" width="1311" height="23" fill="#f3f3f3"/><rect x="542" y="712" width="1311" height="23" fill="#f3f3f3"/><rect x="542.00" y="230" width="3.04" height="23" fill="#efefef"/><rect x="542.00" y="253" width="3.04" height="23" fill="#ebebeb"/><rect x="542.00" y="276" width="3.04" height="23" fill="#efefef"/><rect x="542.00" y="299" width="3.04" height="23" fill="#ebebeb"/><rect x="542.00" y="322" width="3.04" height="23" fill="#efefef"/><rect x="542.00" y="345" width="3.04" height="23" fill="#ebebeb"/><rect x="542.00" y="368" width="3.04" height="23" fill="#efefef"/><rect x="542.00" y="391" width="3.04" height="23" fill="#ebebeb"/><rect x="542.00" y="414" width="3.04" height="23" fill="#efefef"/><rect x="542.00" y="437" width="3.04" height="23" fill="#ebebeb"/><rect x="542.00" y="460" width="3.04" height="23" fill="#efefef"/><rect x="542.00" y="483" width="3.04" height="23" fill="#ebebeb"/><rect x="542.00" y="506" width="3.04" height="23" fill="#efefef"/><rect x="542.00" y="529" width="3.04" height="23" fill="#ebebeb"/><rect x="542.00" y="552" width="3.04" height="23" fill="#efefef"/><rect x="542.00" y="575" width="3.04" height="23" fill="#ebebeb"/><rect x="542.00" y="598" width="3.04" height="23" fill="#efefef"/><rect x="542.00" y="621" width="3.04" height="23" fill="#ebebeb"/><rect x="542.00" y="644" width="3.04" height="23" fill="#efefef"/><rect x="542.00" y="667" width="3.04" height="23" fill="#ebebeb"/><rect x="542.00" y="690" width="3.04" height="23" fill="#efefef"/><rect x="542.00" y="713" width="3.04" height="23" fill="#ebebeb"/><rect x="542.00" y="736" width="3.04" height="23" fill="#efefef"/><rect x="559.33" y="230" width="28.57" height="23" fill="#efefef"/><rect x="559.33" y="253" width="28.57" height="23" fill="#ebebeb"/><rect x="559.33" y="276" width="28.57" height="23" fill="#efefef"/><rect x="559.33" y="299" width="28.57" height="23" fill="#ebebeb"/><rect x="559.33" y="322" width="28.57" height="23" fill="#efefef"/><rect x="559.33" y="345" width="28.57" height="23" fill="#ebebeb"/><rect x="559.33" y="368" width="28.57" height="23" fill="#efefef"/><rect x="559.33" y="391" width="28.57" height="23" fill="#ebebeb"/><rect x="559.33" y="414" width="28.57" height="23" fill="#efefef"/><rect x="559.33" y="437" width="28.57" height="23" fill="#ebebeb"/><rect x="559.33" y="460" width="28.57" height="23" fill="#efefef"/><rect x="559.33" y="483" width="28.57" height="23" fill="#ebebeb"/><rect x="559.33" y="506" width="28.57" height="23" fill="#efefef"/><rect x="559.33" y="529" width="28.57" height="23" fill="#ebebeb"/><rect x="559.33" y="552" width="28.57" height="23" fill="#efefef"/><rect x="559.33" y="575" width="28.57" height="23" fill="#ebebeb"/><rect x="559.33" y="598" width="28.57" height="23" fill="#efefef"/><rect x="559.33" y="621" width="28.57" height="23" fill="#ebebeb"/><rect x="559.33" y="644" width="28.57" height="23" fill="#efefef"/><rect x="559.33" y="667" width="28.57" height="23" fill="#ebebeb"/><rect x="559.33" y="690" width="28.57" height="23" fill="#efefef"/><rect x="559.33" y="713" width="28.57" height="23" fill="#ebebeb"/><rect x="559.33" y="736" width="28.57" height="23" fill="#efefef"/><rect x="573.11" y="230" width="1" height="528" fill="#fff" fill-opacity="0.3"/><rect x="659.33" y="230" width="28.57" height="23" fill="#efefef"/><rect x="659.33" y="253" width="28.57" height="23" fill="#ebebeb"/><rect x="659.33" y="276" width="28.57" height="23" fill="#efefef"/><rect x="659.33" y="299" width="28.57" height="23" fill="#ebebeb"/><rect x="659.33" y="322" width="28.57" height="23" fill="#efefef"/><rect x="659.33" y="345" width="28.57" height="23" fill="#ebebeb"/><rect x="659.33" y="368" width="28.57" height="23" fill="#efefef"/><rect x="659.33" y="391" width="28.57" height="23" fill="#ebebeb"/><rect x="659.33" y="414" width="28.57" height="23" fill="#efefef"/><rect x="659.33" y="437" width="28.57" height="23" fill="#ebebeb"/><rect x="659.33" y="460" width="28.57" height="23" fill="#efefef"/><rect x="659.33" y="483" width="28.57" height="23" fill="#ebebeb"/><rect x="659.33" y="506" width="28.57" height="23" fill="#efefef"/><rect x="659.33" y="529" width="28.57" height="23" fill="#ebebeb"/><rect x="659.33" y="552" width="28.57" height="23" fill="#efefef"/><rect x="659.33" y="575" width="28.57" height="23" fill="#ebebeb"/><rect x="659.33" y="598" width="28.57" height="23" fill="#efefef"/><rect x="659.33" y="621" width="28.57" height="23" fill="#ebebeb"/><rect x="659.33" y="644" width="28.57" height="23" fill="#efefef"/><rect x="659.33" y="667" width="28.57" height="23" fill="#ebebeb"/><rect x="659.33" y="690" width="28.57" height="23" fill="#efefef"/><rect x="659.33" y="713" width="28.57" height="23" fill="#ebebeb"/><rect x="659.33" y="736" width="28.57" height="23" fill="#efefef"/><rect x="673.11" y="230" width="1" height="528" fill="#fff" fill-opacity="0.3"/><rect x="759.33" y="230" width="28.57" height="23" fill="#efefef"/><rect x="759.33" y="253" width="28.57" height="23" fill="#ebebeb"/><rect x="759.33" y="276" width="28.57" height="23" fill="#efefef"/><rect x="759.33" y="299" width="28.57" height="23" fill="#ebebeb"/><rect x="759.33" y="322" width="28.57" height="23" fill="#efefef"/><rect x="759.33" y="345" width="28.57" height="23" fill="#ebebeb"/><rect x="759.33" y="368" width="28.57" height="23" fill="#efefef"/><rect x="759.33" y="391" width="28.57" height="23" fill="#ebebeb"/><rect x="759.33" y="414" width="28.57" height="23" fill="#efefef"/><rect x="759.33" y="437" width="28.57" height="23" fill="#ebebeb"/><rect x="759.33" y="460" width="28.57" height="23" fill="#efefef"/><rect x="759.33" y="483" width="28.57" height="23" fill="#ebebeb"/><rect x="759.33" y="506" width="28.57" height="23" fill="#efefef"/><rect x="759.33" y="529" width="28.57" height="23" fill="#ebebeb"/><rect x="759.33" y="552" width="28.57" height="23" fill="#efefef"/><rect x="759.33" y="575" width="28.57" height="23" fill="#ebebeb"/><rect x="759.33" y="598" width="28.57" height="23" fill="#efefef"/><rect x="759.33" y="621" width="28.57" height="23" fill="#ebebeb"/><rect x="759.33" y="644" width="28.57" height="23" fill="#efefef"/><rect x="759.33" y="667" width="28.57" height="23" fill="#ebebeb"/><rect x="759.33" y="690" width="28.57" height="23" fill="#efefef"/><rect x="759.33" y="713" width="28.57" height="23" fill="#ebebeb"/><rect x="759.33" y="736" width="28.57" height="23" fill="#efefef"/><rect x="773.11" y="230" width="1" height="528" fill="#fff" fill-opacity="0.3"/><rect x="859.33" y="230" width="28.57" height="23" fill="#efefef"/><rect x="859.33" y="253" width="28.57" height="23" fill="#ebebeb"/><rect x="859.33" y="276" width="28.57" height="23" fill="#efefef"/><rect x="859.33" y="299" width="28.57" height="23" fill="#ebebeb"/><rect x="859.33" y="322" width="28.57" height="23" fill="#efefef"/><rect x="859.33" y="345" width="28.57" height="23" fill="#ebebeb"/><rect x="859.33" y="368" width="28.57" height="23" fill="#efefef"/><rect x="859.33" y="391" width="28.57" height="23" fill="#ebebeb"/><rect x="859.33" y="414" width="28.57" height="23" fill="#efefef"/><rect x="859.33" y="437" width="28.57" height="23" fill="#ebebeb"/><rect x="859.33" y="460" width="28.57" height="23" fill="#efefef"/><rect x="859.33" y="483" width="28.57" height="23" fill="#ebebeb"/><rect x="859.33" y="506" width="28.57" height="23" fill="#efefef"/><rect x="859.33" y="529" width="28.57" height="23" fill="#ebebeb"/><rect x="859.33" y="552" width="28.57" height="23" fill="#efefef"/><rect x="859.33" y="575" width="28.57" height="23" fill="#ebebeb"/><rect x="859.33" y="598" width="28.57" height="23" fill="#efefef"/><rect x="859.33" y="621" width="28.57" height="23" fill="#ebebeb"/><rect x="859.33" y="644" width="28.57" height="23" fill="#efefef"/><rect x="859.33" y="667" width="28.57" height="23" fill="#ebebeb"/><rect x="859.33" y="690" width="28.57" height="23" fill="#efefef"/><rect x="859.33" y="713" width="28.57" height="23" fill="#ebebeb"/><rect x="859.33" y="736" width="28.57" height="23" fill="#efefef"/><rect x="873.11" y="230" width="1" height="528" fill="#fff" fill-opacity="0.3"/><rect x="959.33" y="230" width="28.57" height="23" fill="#efefef"/><rect x="959.33" y="253" width="28.57" height="23" fill="#ebebeb"/><rect x="959.33" y="276" width="28.57" height="23" fill="#efefef"/><rect x="959.33" y="299" width="28.57" height="23" fill="#ebebeb"/><rect x="959.33" y="322" width="28.57" height="23" fill="#efefef"/><rect x="959.33" y="345" width="28.57" height="23" fill="#ebebeb"/><rect x="959.33" y="368" width="28.57" height="23" fill="#efefef"/><rect x="959.33" y="391" width="28.57" height="23" fill="#ebebeb"/><rect x="959.33" y="414" width="28.57" height="23" fill="#efefef"/><rect x="959.33" y="437" width="28.57" height="23" fill="#ebebeb"/><rect x="959.33" y="460" width="28.57" height="23" fill="#efefef"/><rect x="959.33" y="483" width="28.57" height="23" fill="#ebebeb"/><rect x="959.33" y="506" width="28.57" height="23" fill="#efefef"/><rect x="959.33" y="529" width="28.57" height="23" fill="#ebebeb"/><rect x="959.33" y="552" width="28.57" height="23" fill="#efefef"/><rect x="959.33" y="575" width="28.57" height="23" fill="#ebebeb"/><rect x="959.33" y="598" width="28.57" height="23" fill="#efefef"/><rect x="959.33" y="621" width="28.57" height="23" fill="#ebebeb"/><rect x="959.33" y="644" width="28.57" height="23" fill="#efefef"/><rect x="959.33" y="667" width="28.57" height="23" fill="#ebebeb"/><rect x="959.33" y="690" width="28.57" height="23" fill="#efefef"/><rect x="959.33" y="713" width="28.57" height="23" fill="#ebebeb"/><rect x="959.33" y="736" width="28.57" height="23" fill="#efefef"/><rect x="973.11" y="230" width="1" height="528" fill="#fff" fill-opacity="0.3"/><rect x="1059.33" y="230" width="28.57" height="23" fill="#efefef"/><rect x="1059.33" y="253" width="28.57" height="23" fill="#ebebeb"/><rect x="1059.33" y="276" width="28.57" height="23" fill="#efefef"/><rect x="1059.33" y="299" width="28.57" height="23" fill="#ebebeb"/><rect x="1059.33" y="322" width="28.57" height="23" fill="#efefef"/><rect x="1059.33" y="345" width="28.57" height="23" fill="#ebebeb"/><rect x="1059.33" y="368" width="28.57" height="23" fill="#efefef"/><rect x="1059.33" y="391" width="28.57" height="23" fill="#ebebeb"/><rect x="1059.33" y="414" width="28.57" height="23" fill="#efefef"/><rect x="1059.33" y="437" width="28.57" height="23" fill="#ebebeb"/><rect x="1059.33" y="460" width="28.57" height="23" fill="#efefef"/><rect x="1059.33" y="483" width="28.57" height="23" fill="#ebebeb"/><rect x="1059.33" y="506" width="28.57" height="23" fill="#efefef"/><rect x="1059.33" y="529" width="28.57" height="23" fill="#ebebeb"/><rect x="1059.33" y="552" width="28.57" height="23" fill="#efefef"/><rect x="1059.33" y="575" width="28.57" height="23" fill="#ebebeb"/><rect x="1059.33" y="598" width="28.57" height="23" fill="#efefef"/><rect x="1059.33" y="621" width="28.57" height="23" fill="#ebebeb"/><rect x="1059.33" y="644" width="28.57" height="23" fill="#efefef"/><rect x="1059.33" y="667" width="28.57" height="23" fill="#ebebeb"/><rect x="1059.33" y="690" width="28.57" height="23" fill="#efefef"/><rect x="1059.33" y="713" width="28.57" height="23" fill="#ebebeb"/><rect x="1059.33" y="736" width="28.57" height="23" fill="#efefef"/><rect x="1073.11" y="230" width="1" height="528" fill="#fff" fill-opacity="0.3"/><rect x="1159.33" y="230" width="28.57" height="23" fill="#efefef"/><rect x="1159.33" y="253" width="28.57" height="23" fill="#ebebeb"/><rect x="1159.33" y="276" width="28.57" height="23" fill="#efefef"/><rect x="1159.33" y="299" width="28.57" height="23" fill="#ebebeb"/><rect x="1159.33" y="322" width="28.57" height="23" fill="#efefef"/><rect x="1159.33" y="345" width="28.57" height="23" fill="#ebebeb"/><rect x="1159.33" y="368" width="28.57" height="23" fill="#efefef"/><rect x="1159.33" y="391" width="28.57" height="23" fill="#ebebeb"/><rect x="1159.33" y="414" width="28.57" height="23" fill="#efefef"/><rect x="1159.33" y="437" width="28.57" height="23" fill="#ebebeb"/><rect x="1159.33" y="460" width="28.57" height="23" fill="#efefef"/><rect x="1159.33" y="483" width="28.57" height="23" fill="#ebebeb"/><rect x="1159.33" y="506" width="28.57" height="23" fill="#efefef"/><rect x="1159.33" y="529" width="28.57" height="23" fill="#ebebeb"/><rect x="1159.33" y="552" width="28.57" height="23" fill="#efefef"/><rect x="1159.33" y="575" width="28.57" height="23" fill="#ebebeb"/><rect x="1159.33" y="598" width="28.57" height="23" fill="#efefef"/><rect x="1159.33" y="621" width="28.57" height="23" fill="#ebebeb"/><rect x="1159.33" y="644" width="28.57" height="23" fill="#efefef"/><rect x="1159.33" y="667" width="28.57" height="23" fill="#ebebeb"/><rect x="1159.33" y="690" width="28.57" height="23" fill="#efefef"/><rect x="1159.33" y="713" width="28.57" height="23" fill="#ebebeb"/><rect x="1159.33" y="736" width="28.57" height="23" fill="#efefef"/><rect x="1173.11" y="230" width="1" height="528" fill="#fff" fill-opacity="0.3"/><rect x="1259.33" y="230" width="28.57" height="23" fill="#efefef"/><rect x="1259.33" y="253" width="28.57" height="23" fill="#ebebeb"/><rect x="1259.33" y="276" width="28.57" height="23" fill="#efefef"/><rect x="1259.33" y="299" width="28.57" height="23" fill="#ebebeb"/><rect x="1259.33" y="322" width="28.57" height="23" fill="#efefef"/><rect x="1259.33" y="345" width="28.57" height="23" fill="#ebebeb"/><rect x="1259.33" y="368" width="28.57" height="23" fill="#efefef"/><rect x="1259.33" y="391" width="28.57" height="23" fill="#ebebeb"/><rect x="1259.33" y="414" width="28.57" height="23" fill="#efefef"/><rect x="1259.33" y="437" width="28.57" height="23" fill="#ebebeb"/><rect x="1259.33" y="460" width="28.57" height="23" fill="#efefef"/><rect x="1259.33" y="483" width="28.57" height="23" fill="#ebebeb"/><rect x="1259.33" y="506" width="28.57" height="23" fill="#efefef"/><rect x="1259.33" y="529" width="28.57" height="23" fill="#ebebeb"/><rect x="1259.33" y="552" width="28.57" height="23" fill="#efefef"/><rect x="1259.33" y="575" width="28.57" height="23" fill="#ebebeb"/><rect x="1259.33" y="598" width="28.57" height="23" fill="#efefef"/><rect x="1259.33" y="621" width="28.57" height="23" fill="#ebebeb"/><rect x="1259.33" y="644" width="28.57" height="23" fill="#efefef"/><rect x="1259.33" y="667" width="28.57" height="23" fill="#ebebeb"/><rect x="1259.33" y="690" width="28.57" height="23" fill="#efefef"/><rect x="1259.33" y="713" width="28.57" height="23" fill="#ebebeb"/><rect x="1259.33" y="736" width="28.57" height="23" fill="#efefef"/><rect x="1273.11" y="230" width="1" height="528" fill="#fff" fill-opacity="0.3"/><rect x="1359.33" y="230" width="28.57" height="23" fill="#efefef"/><rect x="1359.33" y="253" width="28.57" height="23" fill="#ebebeb"/><rect x="1359.33" y="276" width="28.57" height="23" fill="#efefef"/><rect x="1359.33" y="299" width="28.57" height="23" fill="#ebebeb"/><rect x="1359.33" y="322" width="28.57" height="23" fill="#efefef"/><rect x="1359.33" y="345" width="28.57" height="23" fill="#ebebeb"/><rect x="1359.33" y="368" width="28.57" height="23" fill="#efefef"/><rect x="1359.33" y="391" width="28.57" height="23" fill="#ebebeb"/><rect x="1359.33" y="414" width="28.57" height="23" fill="#efefef"/><rect x="1359.33" y="437" width="28.57" height="23" fill="#ebebeb"/><rect x="1359.33" y="460" width="28.57" height="23" fill="#efefef"/><rect x="1359.33" y="483" width="28.57" height="23" fill="#ebebeb"/><rect x="1359.33" y="506" width="28.57" height="23" fill="#efefef"/><rect x="1359.33" y="529" width="28.57" height="23" fill="#ebebeb"/><rect x="1359.33" y="552" width="28.57" height="23" fill="#efefef"/><rect x="1359.33" y="575" width="28.57" height="23" fill="#ebebeb"/><rect x="1359.33" y="598" width="28.57" height="23" fill="#efefef"/><rect x="1359.33" y="621" width="28.57" height="23" fill="#ebebeb"/><rect x="1359.33" y="644" width="28.57" height="23" fill="#efefef"/><rect x="1359.33" y="667" width="28.57" height="23" fill="#ebebeb"/><rect x="1359.33" y="690" width="28.57" height="23" fill="#efefef"/><rect x="1359.33" y="713" width="28.57" height="23" fill="#ebebeb"/><rect x="1359.33" y="736" width="28.57" height="23" fill="#efefef"/><rect x="1373.11" y="230" width="1" height="528" fill="#fff" fill-opacity="0.3"/><rect x="1459.33" y="230" width="28.57" height="23" fill="#efefef"/><rect x="1459.33" y="253" width="28.57" height="23" fill="#ebebeb"/><rect x="1459.33" y="276" width="28.57" height="23" fill="#efefef"/><rect x="1459.33" y="299" width="28.57" height="23" fill="#ebebeb"/><rect x="1459.33" y="322" width="28.57" height="23" fill="#efefef"/><rect x="1459.33" y="345" width="28.57" height="23" fill="#ebebeb"/><rect x="1459.33" y="368" width="28.57" height="23" fill="#efefef"/><rect x="1459.33" y="391" width="28.57" height="23" fill="#ebebeb"/><rect x="1459.33" y="414" width="28.57" height="23" fill="#efefef"/><rect x="1459.33" y="437" width="28.57" height="23" fill="#ebebeb"/><rect x="1459.33" y="460" width="28.57" height="23" fill="#efefef"/><rect x="1459.33" y="483" width="28.57" height="23" fill="#ebebeb"/><rect x="1459.33" y="506" width="28.57" height="23" fill="#efefef"/><rect x="1459.33" y="529" width="28.57" height="23" fill="#ebebeb"/><rect x="1459.33" y="552" width="28.57" height="23" fill="#efefef"/><rect x="1459.33" y="575" width="28.57" height="23" fill="#ebebeb"/><rect x="1459.33" y="598" width="28.57" height="23" fill="#efefef"/><rect x="1459.33" y="621" width="28.57" height="23" fill="#ebebeb"/><rect x="1459.33" y="644" width="28.57" height="23" fill="#efefef"/><rect x="1459.33" y="667" width="28.57" height="23" fill="#ebebeb"/><rect x="1459.33" y="690" width="28.57" height="23" fill="#efefef"/><rect x="1459.33" y="713" width="28.57" height="23" fill="#ebebeb"/><rect x="1459.33" y="736" width="28.57" height="23" fill="#efefef"/><rect x="1473.11" y="230" width="1" height="528" fill="#fff" fill-opacity="0.3"/><rect x="1559.33" y="230" width="28.57" height="23" fill="#efefef"/><rect x="1559.33" y="253" width="28.57" height="23" fill="#ebebeb"/><rect x="1559.33" y="276" width="28.57" height="23" fill="#efefef"/><rect x="1559.33" y="299" width="28.57" height="23" fill="#ebebeb"/><rect x="1559.33" y="322" width="28.57" height="23" fill="#efefef"/><rect x="1559.33" y="345" width="28.57" height="23" fill="#ebebeb"/><rect x="1559.33" y="368" width="28.57" height="23" fill="#efefef"/><rect x="1559.33" y="391" width="28.57" height="23" fill="#ebebeb"/><rect x="1559.33" y="414" width="28.57" height="23" fill="#efefef"/><rect x="1559.33" y="437" width="28.57" height="23" fill="#ebebeb"/><rect x="1559.33" y="460" width="28.57" height="23" fill="#efefef"/><rect x="1559.33" y="483" width="28.57" height="23" fill="#ebebeb"/><rect x="1559.33" y="506" width="28.57" height="23" fill="#efefef"/><rect x="1559.33" y="529" width="28.57" height="23" fill="#ebebeb"/><rect x="1559.33" y="552" width="28.57" height="23" fill="#efefef"/><rect x="1559.33" y="575" width="28.57" height="23" fill="#ebebeb"/><rect x="1559.33" y="598" width="28.57" height="23" fill="#efefef"/><rect x="1559.33" y="621" width="28.57" height="23" fill="#ebebeb"/><rect x="1559.33" y="644" width="28.57" height="23" fill="#efefef"/><rect x="1559.33" y="667" width="28.57" height="23" fill="#ebebeb"/><rect x="1559.33" y="690" width="28.57" height="23" fill="#efefef"/><rect x="1559.33" y="713" width="28.57" height="23" fill="#ebebeb"/><rect x="1559.33" y="736" width="28.57" height="23" fill="#efefef"/><rect x="1573.11" y="230" width="1" height="528" fill="#fff" fill-opacity="0.3"/><rect x="1659.33" y="230" width="28.57" height="23" fill="#efefef"/><rect x="1659.33" y="253" width="28.57" height="23" fill="#ebebeb"/><rect x="1659.33" y="276" width="28.57" height="23" fill="#efefef"/><rect x="1659.33" y="299" width="28.57" height="23" fill="#ebebeb"/><rect x="1659.33" y="322" width="28.57" height="23" fill="#efefef"/><rect x="1659.33" y="345" width="28.57" height="23" fill="#ebebeb"/><rect x="1659.33" y="368" width="28.57" height="23" fill="#efefef"/><rect x="1659.33" y="391" width="28.57" height="23" fill="#ebebeb"/><rect x="1659.33" y="414" width="28.57" height="23" fill="#efefef"/><rect x="1659.33" y="437" width="28.57" height="23" fill="#ebebeb"/><rect x="1659.33" y="460" width="28.57" height="23" fill="#efefef"/><rect x="1659.33" y="483" width="28.57" height="23" fill="#ebebeb"/><rect x="1659.33" y="506" width="28.57" height="23" fill="#efefef"/><rect x="1659.33" y="529" width="28.57" height="23" fill="#ebebeb"/><rect x="1659.33" y="552" width="28.57" height="23" fill="#efefef"/><rect x="1659.33" y="575" width="28.57" height="23" fill="#ebebeb"/><rect x="1659.33" y="598" width="28.57" height="23" fill="#efefef"/><rect x="1659.33" y="621" width="28.57" height="23" fill="#ebebeb"/><rect x="1659.33" y="644" width="28.57" height="23" fill="#efefef"/><rect x="1659.33" y="667" width="28.57" height="23" fill="#ebebeb"/><rect x="1659.33" y="690" width="28.57" height="23" fill="#efefef"/><rect x="1659.33" y="713" width="28.57" height="23" fill="#ebebeb"/><rect x="1659.33" y="736" width="28.57" height="23" fill="#efefef"/><rect x="1673.11" y="230" width="1" height="528" fill="#fff" fill-opacity="0.3"/><rect x="1759.33" y="230" width="28.57" height="23" fill="#efefef"/><rect x="1759.33" y="253" width="28.57" height="23" fill="#ebebeb"/><rect x="1759.33" y="276" width="28.57" height="23" fill="#efefef"/><rect x="1759.33" y="299" width="28.57" height="23" fill="#ebebeb"/><rect x="1759.33" y="322" width="28.57" height="23" fill="#efefef"/><rect x="1759.33" y="345" width="28.57" height="23" fill="#ebebeb"/><rect x="1759.33" y="368" width="28.57" height="23" fill="#efefef"/><rect x="1759.33" y="391" width="28.57" height="23" fill="#ebebeb"/><rect x="1759.33" y="414" width="28.57" height="23" fill="#efefef"/><rect x="1759.33" y="437" width="28.57" height="23" fill="#ebebeb"/><rect x="1759.33" y="460" width="28.57" height="23" fill="#efefef"/><rect x="1759.33" y="483" width="28.57" height="23" fill="#ebebeb"/><rect x="1759.33" y="506" width="28.57" height="23" fill="#efefef"/><rect x="1759.33" y="529" width="28.57" height="23" fill="#ebebeb"/><rect x="1759.33" y="552" width="28.57" height="23" fill="#efefef"/><rect x="1759.33" y="575" width="28.57" height="23" fill="#ebebeb"/><rect x="1759.33" y="598" width="28.57" height="23" fill="#efefef"/><rect x="1759.33" y="621" width="28.57" height="23" fill="#ebebeb"/><rect x="1759.33" y="644" width="28.57" height="23" fill="#efefef"/><rect x="1759.33" y="667" width="28.57" height="23" fill="#ebebeb"/><rect x="1759.33" y="690" width="28.57" height="23" fill="#efefef"/><rect x="1759.33" y="713" width="28.57" height="23" fill="#ebebeb"/><rect x="1759.33" y="736" width="28.57" height="23" fill="#efefef"/><rect x="1773.11" y="230" width="1" height="528" fill="#fff" fill-opacity="0.3"/><rect x="1859.33" y="230" width="28.57" height="23" fill="#efefef"/><rect x="1859.33" y="253" width="28.57" height="23" fill="#ebebeb"/><rect x="1859.33" y="276" width="28.57" height="23" fill="#efefef"/><rect x="1859.33" y="299" width="28.57" height="23" fill="#ebebeb"/><rect x="1859.33" y="322" width="28.57" height="23" fill="#efefef"/><rect x="1859.33" y="345" width="28.57" height="23" fill="#ebebeb"/><rect x="1859.33" y="368" width="28.57" height="23" fill="#efefef"/><rect x="1859.33" y="391" width="28.57" height="23" fill="#ebebeb"/><rect x="1859.33" y="414" width="28.57" height="23" fill="#efefef"/><rect x="1859.33" y="437" width="28.57" height="23" fill="#ebebeb"/><rect x="1859.33" y="460" width="28.57" height="23" fill="#efefef"/><rect x="1859.33" y="483" width="28.57" height="23" fill="#ebebeb"/><rect x="1859.33" y="506" width="28.57" height="23" fill="#efefef"/><rect x="1859.33" y="529" width="28.57" height="23" fill="#ebebeb"/><rect x="1859.33" y="552" width="28.57" height="23" fill="#efefef"/><rect x="1859.33" y="575" width="28.57" height="23" fill="#ebebeb"/><rect x="1859.33" y="598" width="28.57" height="23" fill="#efefef"/><rect x="1859.33" y="621" width="28.57" height="23" fill="#ebebeb"/><rect x="1859.33" y="644" width="28.57" height="23" fill="#efefef"/><rect x="1859.33" y="667" width="28.57" height="23" fill="#ebebeb"/><rect x="1859.33" y="690" width="28.57" height="23" fill="#efefef"/><rect x="1859.33" y="713" width="28.57" height="23" fill="#ebebeb"/><rect x="1859.33" y="736" width="28.57" height="23" fill="#efefef"/><rect x="1873.11" y="230" width="1" height="528" fill="#fff" fill-opacity="0.3"/><rect x="542" y="229" width="1311" height="1" fill="#cdcdcd"/><rect x="542" y="252" width="1311" height="1" fill="#cdcdcd"/><rect x="542" y="275" width="1311" height="1" fill="#cdcdcd"/><rect x="542" y="298" width="1311" height="1" fill="#cdcdcd"/><rect x="542" y="321" width="1311" height="1" fill="#cdcdcd"/><rect x="542" y="344" width="1311" height="1" fill="#cdcdcd"/><rect x="542" y="367" width="1311" height="1" fill="#cdcdcd"/><rect x="542" y="390" width="1311" height="1" fill="#cdcdcd"/><rect x="542" y="413" width="1311" height="1" fill="#cdcdcd"/><rect x="542" y="436" width="1311" height="1" fill="#cdcdcd"/><rect x="542" y="459" width="1311" height="1" fill="#cdcdcd"/><rect x="542" y="482" width="1311" height="1" fill="#cdcdcd"/><rect x="542" y="505" width="1311" height="1" fill="#cdcdcd"/><rect x="542" y="528" width="1311" height="1" fill="#cdcdcd"/><rect x="542" y="551" width="1311" height="1" fill="#cdcdcd"/><rect x="542" y="574" width="1311" height="1" fill="#cdcdcd"/><rect x="542" y="597" width="1311" height="1" fill="#cdcdcd"/><rect x="542" y="620" width="1311" height="1" fill="#cdcdcd"/><rect x="542" y="643" width="1311" height="1" fill="#cdcdcd"/><rect x="542" y="666" width="1311" height="1" fill="#cdcdcd"/><rect x="542" y="689" width="1311" height="1" fill="#cdcdcd"/><rect x="542" y="712" width="1311" height="1" fill="#cdcdcd"/><rect x="542" y="735" width="1311" height="1" fill="#cdcdcd"/><rect x="542" y="184" width="1311" height="23" fill="#8c8c8c"/><rect x="542" y="185" width="1311" height="21" fill="#fdfdfd"/><rect x="542" y="186" width="1311" height="19" fill="url(#mh)"/><rect x="929" y="185" width="3" height="21" fill="#fdfdfd"/><rect x="930" y="185" width="1" height="21" fill="#8c8c8c"/><rect x="1372" y="185" width="3" height="21" fill="#fdfdfd"/><rect x="1373" y="185" width="1" height="21" fill="#8c8c8c"/><rect x="1815" y="185" width="3" height="21" fill="#fdfdfd"/><rect x="1816" y="185" width="1" height="21" fill="#8c8c8c"/><rect x="542" y="207" width="1311" height="22" fill="#fff"/><rect x="587" y="207" width="1" height="22" fill="#b9b9b9"/><rect x="687" y="207" width="1" height="22" fill="#b9b9b9"/><rect x="787" y="207" width="1" height="22" fill="#b9b9b9"/><rect x="887" y="207" width="1" height="22" fill="#b9b9b9"/><rect x="987" y="207" width="1" height="22" fill="#b9b9b9"/><rect x="1087" y="207" width="1" height="22" fill="#b9b9b9"/><rect x="1187" y="207" width="1" height="22" fill="#b9b9b9"/><rect x="1287" y="207" width="1" height="22" fill="#b9b9b9"/><rect x="1387" y="207" width="1" height="22" fill="#b9b9b9"/><rect x="1487" y="207" width="1" height="22" fill="#b9b9b9"/><rect x="1587" y="207" width="1" height="22" fill="#b9b9b9"/><rect x="1687" y="207" width="1" height="22" fill="#b9b9b9"/><rect x="1787" y="207" width="1" height="22" fill="#b9b9b9"/><rect x="1059" y="230" width="2" height="528" fill="#a3a3a3"/><rect x="583" y="238" width="1300" height="6" fill="#da5b10"/><path d="M583 238 H592.4 V243.2 L587.6 247.4 L583 243.2 Z" fill="#da5b10"/><rect x="587.85" y="255.75" width="27.10" height="15.50" rx="1.6" fill="#f4f8ff" stroke="#000" stroke-width="1.4"/><rect x="589.70" y="257.60" width="23.40" height="11.80" fill="#6495ed"/><rect x="587.85" y="279.65" width="27.10" height="15.50" rx="1.6" fill="#f4f8ff" stroke="#000" stroke-width="1.4"/><rect x="589.70" y="281.50" width="23.40" height="11.80" fill="#6495ed"/><rect x="616.75" y="301.75" width="41.30" height="15.50" rx="1.6" fill="#f4f8ff" stroke="#000" stroke-width="1.4"/><rect x="618.60" y="303.60" width="37.60" height="11.80" fill="#6495ed"/><rect x="616.75" y="325.65" width="41.30" height="15.50" rx="1.6" fill="#f4f8ff" stroke="#000" stroke-width="1.4"/><rect x="618.60" y="327.50" width="37.60" height="11.80" fill="#6495ed"/><rect x="688.15" y="346.75" width="370.10" height="18.50" rx="1.6" fill="#f4f8ff" stroke="#000" stroke-width="1.4"/><rect x="690.00" y="348.60" width="366.40" height="14.80" fill="#6495ed"/><path d="M1058 348.7 L1052 354.7 L1058 360.7 Z" fill="#000"/><rect x="688.15" y="370.05" width="370.10" height="18.00" rx="1.6" fill="#f4f8ff" stroke="#000" stroke-width="1.4"/><rect x="690.00" y="371.90" width="366.40" height="14.30" fill="#6495ed"/><path d="M1058 371.75 L1052 377.75 L1058 383.75 Z" fill="#000"/><rect x="845.75" y="393.75" width="198.10" height="15.50" rx="1.6" fill="#f4f8ff" stroke="#000" stroke-width="1.4"/><rect x="847.60" y="395.60" width="194.40" height="11.80" fill="#6495ed"/><rect x="845.75" y="417.65" width="198.10" height="15.50" rx="1.6" fill="#f4f8ff" stroke="#000" stroke-width="1.4"/><rect x="847.60" y="419.50" width="194.40" height="11.80" fill="#6495ed"/><rect x="945.75" y="439.75" width="198.10" height="15.50" rx="1.6" fill="#f4f8ff" stroke="#000" stroke-width="1.4"/><rect x="947.60" y="441.60" width="194.40" height="11.80" fill="#6495ed"/><rect x="945.75" y="463.65" width="198.10" height="15.50" rx="1.6" fill="#f4f8ff" stroke="#000" stroke-width="1.4"/><rect x="947.60" y="465.50" width="194.40" height="11.80" fill="#6495ed"/><rect x="1145.75" y="485.75" width="753.50" height="15.50" rx="1.6" fill="#f4f8ff" stroke="#000" stroke-width="1.4"/><rect x="1147.60" y="487.60" width="749.80" height="11.80" fill="#6495ed"/><rect x="1145.75" y="509.65" width="753.50" height="15.50" rx="1.6" fill="#f4f8ff" stroke="#000" stroke-width="1.4"/><rect x="1147.60" y="511.50" width="749.80" height="11.80" fill="#6495ed"/><rect x="1745.75" y="531.75" width="153.50" height="15.50" rx="1.6" fill="#f4f8ff" stroke="#000" stroke-width="1.4"/><rect x="1747.60" y="533.60" width="149.80" height="11.80" fill="url(#selbar)"/><rect x="1745.75" y="555.65" width="153.50" height="15.50" rx="1.6" fill="#f4f8ff" stroke="#000" stroke-width="1.4"/><rect x="1747.60" y="557.50" width="149.80" height="11.80" fill="#6495ed"/></g><g transform="translate(1752.6,532.2)" fill="none" stroke="#1f9ae6" stroke-width="1.1"><path d="M2.6 3.8 Q2.6 0.7 5.2 0.7 Q7.8 0.7 7.8 3.8"/><path d="M1.6 4 H8.8"/><path d="M3 4.2 Q3 7.2 5.2 7.2 Q7.4 7.2 7.4 4.2"/><path d="M0.6 13.6 Q0.8 9.6 3.4 8.6 L5.2 10.6 L7 8.6 Q9.6 9.6 9.8 13.6"/><path d="M3.2 8.4 L7.6 12.8 M7.2 8.4 L2.8 12.8"/></g><g transform="translate(1752.6,556.2)" fill="none" stroke="#1f9ae6" stroke-width="1.1"><path d="M2.6 3.8 Q2.6 0.7 5.2 0.7 Q7.8 0.7 7.8 3.8"/><path d="M1.6 4 H8.8"/><path d="M3 4.2 Q3 7.2 5.2 7.2 Q7.4 7.2 7.4 4.2"/><path d="M0.6 13.6 Q0.8 9.6 3.4 8.6 L5.2 10.6 L7 8.6 Q9.6 9.6 9.8 13.6"/><path d="M3.2 8.4 L7.6 12.8 M7.2 8.4 L2.8 12.8"/></g></svg>
<div style="left:542px;top:186px;width:17px;height:19px;overflow:hidden">
<span class="t" style="left:-36.20px;top:2px;font-size:12.0px;line-height:19px;color:#1a1a1a;letter-spacing:-0.410px;">Juni, 2021</span>
</div>
<span class="t" style="left:934.00px;top:188px;font-size:12.0px;line-height:19px;color:#1a1a1a;letter-spacing:-0.397px;">Juli, 2021</span>
<span class="t" style="left:1377.00px;top:188px;font-size:12.0px;line-height:19px;color:#1a1a1a;letter-spacing:-0.194px;">August, 2021</span>
<span class="t" style="left:1819.80px;top:188px;font-size:12.0px;line-height:19px;color:#1a1a1a;letter-spacing:-0.300px;width:33px;overflow:hidden;">September, 2021</span>
<span class="t" style="left:591.20px;top:208px;font-size:10.3px;line-height:16px;color:#222;letter-spacing:-0.327px;">23 KW</span>
<span class="t" style="left:691.20px;top:208px;font-size:10.3px;line-height:16px;color:#222;letter-spacing:-0.327px;">24 KW</span>
<span class="t" style="left:791.20px;top:208px;font-size:10.3px;line-height:16px;color:#222;letter-spacing:-0.327px;">25 KW</span>
<span class="t" style="left:891.20px;top:208px;font-size:10.3px;line-height:16px;color:#222;letter-spacing:-0.327px;">26 KW</span>
<span class="t" style="left:991.20px;top:208px;font-size:10.3px;line-height:16px;color:#222;letter-spacing:-0.327px;">27 KW</span>
<span class="t" style="left:1091.20px;top:208px;font-size:10.3px;line-height:16px;color:#222;letter-spacing:-0.327px;">28 KW</span>
<span class="t" style="left:1191.20px;top:208px;font-size:10.3px;line-height:16px;color:#222;letter-spacing:-0.327px;">29 KW</span>
<span class="t" style="left:1291.20px;top:208px;font-size:10.3px;line-height:16px;color:#222;letter-spacing:-0.327px;">30 KW</span>
<span class="t" style="left:1391.20px;top:208px;font-size:10.3px;line-height:16px;color:#222;letter-spacing:-0.327px;">31 KW</span>
<span class="t" style="left:1491.20px;top:208px;font-size:10.3px;line-height:16px;color:#222;letter-spacing:-0.327px;">32 KW</span>
<span class="t" style="left:1591.20px;top:208px;font-size:10.3px;line-height:16px;color:#222;letter-spacing:-0.327px;">33 KW</span>
<span class="t" style="left:1691.20px;top:208px;font-size:10.3px;line-height:16px;color:#222;letter-spacing:-0.327px;">34 KW</span>
<span class="t" style="left:1791.20px;top:208px;font-size:10.3px;line-height:16px;color:#222;letter-spacing:-0.327px;">35 KW</span>
<span class="t" style="left:593.00px;top:233px;font-size:9.5px;line-height:15px;color:#2a1405;letter-spacing:0.244px;">112873-Industrieanlagenbau Memmingen &amp; Montage (IAB-M)-Umbau Meisenacker IAB/2021-0</span>
<span class="t" style="left:592.50px;top:256px;font-size:9.5px;line-height:15px;color:#141414;letter-spacing:0.286px;">112873-Auftragsbestätigung-/Bearbeitung-0</span>
<span class="t" style="left:592.50px;top:279px;font-size:9.5px;line-height:15px;color:#141414;letter-spacing:0.286px;">112873-Auftragsbestätigung-/Bearbeitung-0</span>
<span class="t" style="left:621.70px;top:302px;font-size:9.5px;line-height:15px;color:#141414;letter-spacing:0.233px;">112873-Projektbesprechung/Kickoff-0</span>
<span class="t" style="left:621.70px;top:325px;font-size:9.5px;line-height:15px;color:#141414;letter-spacing:0.233px;">112873-Projektbesprechung/Kickoff-0</span>
<span class="t" style="left:692.50px;top:348px;font-size:9.5px;line-height:15px;color:#141414;letter-spacing:0.259px;">112873-Konstruktion-0</span>
<span class="t" style="left:692.50px;top:371px;font-size:9.5px;line-height:15px;color:#141414;letter-spacing:0.259px;">112873-Konstruktion-0</span>
<span class="t" style="left:850.50px;top:394px;font-size:9.5px;line-height:15px;color:#141414;letter-spacing:0.223px;">112873-Elektro-Konstruktion-0</span>
<span class="t" style="left:850.50px;top:417px;font-size:9.5px;line-height:15px;color:#141414;letter-spacing:0.223px;">112873-Elektro-Konstruktion-0</span>
<span class="t" style="left:950.70px;top:440px;font-size:9.5px;line-height:15px;color:#141414;letter-spacing:0.069px;">112873-Beschaffung HGB1-0</span>
<span class="t" style="left:950.70px;top:463px;font-size:9.5px;line-height:15px;color:#141414;letter-spacing:0.069px;">112873-Beschaffung HGB1-0</span>
<span class="t" style="left:1150.70px;top:486px;font-size:9.5px;line-height:15px;color:#141414;letter-spacing:0.210px;">112873-Mech. Fertigung-0</span>
<span class="t" style="left:1150.70px;top:509px;font-size:9.5px;line-height:15px;color:#141414;letter-spacing:0.210px;">112873-Mech. Fertigung-0</span>
<span class="t" style="left:1771.50px;top:532px;font-size:9.5px;line-height:15px;color:#141414;letter-spacing:0.080px;width:81.5px;overflow:hidden;">112873-Vormontage-0</span>
<span class="t" style="left:1771.50px;top:555px;font-size:9.5px;line-height:15px;color:#141414;letter-spacing:0.080px;width:81.5px;overflow:hidden;">112873-Vormontage-0</span>
<div style="left:296px;top:446px;width:614px;height:541px;background:#fff;border:1px solid #c6c6c6;box-shadow:1.5px 1.5px 4px rgba(0,0,0,0.25);"></div>
<svg style="left:307px;top:456px" width="24" height="23" viewBox="0 0 24 23" ><rect x="1" y="1" width="4" height="4" fill="#fff" stroke="#1b8fcc" stroke-width="2"/><rect x="8" y="2" width="15" height="2" fill="#1b8fcc"/><rect x="1" y="9" width="4" height="4" fill="#fff" stroke="#1b8fcc" stroke-width="2"/><rect x="8" y="10" width="15" height="2" fill="#1b8fcc"/><rect x="1" y="17" width="4" height="4" fill="#fff" stroke="#1b8fcc" stroke-width="2"/><rect x="8" y="18" width="15" height="2" fill="#1b8fcc"/></svg>
<span class="t" style="left:349.00px;top:454px;font-size:14.0px;line-height:22px;color:#4f4f4f;letter-spacing:-0.102px;">Details zur Grobplanung 1767 Position 40</span>
<span class="t" style="left:315.20px;top:492px;font-size:11.6px;line-height:19px;color:#5e5e5e;letter-spacing:0.017px;">Kunde</span>
<span class="t" style="left:451.80px;top:492px;font-size:11.6px;line-height:19px;color:#6e6e6e;font-weight:700;letter-spacing:0.324px;">232323 Industrieanlagenbau Memmingen &amp; Montage</span>
<span class="t" style="left:315.20px;top:510px;font-size:11.6px;line-height:19px;color:#5e5e5e;letter-spacing:0.084px;">Projekt</span>
<span class="t" style="left:451.80px;top:510px;font-size:11.6px;line-height:19px;color:#6e6e6e;font-weight:700;letter-spacing:0.372px;">P120205799(0)</span>
<span class="t" style="left:604.80px;top:510px;font-size:11.6px;line-height:19px;color:#5e5e5e;letter-spacing:0.064px;">Position</span>
<span class="t" style="left:735.60px;top:510px;font-size:11.6px;line-height:19px;color:#6e6e6e;font-weight:700;letter-spacing:0.098px;">10 TP Teilprojekt Anlage</span>
<span class="t" style="left:315.20px;top:528px;font-size:11.6px;line-height:19px;color:#5e5e5e;letter-spacing:0.105px;">Kaufmännischer Auftrag</span>
<span class="t" style="left:451.80px;top:528px;font-size:11.6px;line-height:19px;color:#6e6e6e;font-weight:700;letter-spacing:0.288px;">KA2021112873</span>
<span class="t" style="left:604.80px;top:528px;font-size:11.6px;line-height:19px;color:#5e5e5e;letter-spacing:0.064px;">Position</span>
<span class="t" style="left:315.20px;top:546px;font-size:11.6px;line-height:19px;color:#5e5e5e;letter-spacing:-0.008px;">Technischer Auftrag</span>
<span class="t" style="left:451.80px;top:546px;font-size:11.6px;line-height:19px;color:#6e6e6e;font-weight:700;letter-spacing:0.288px;">KA2021112873</span>
<span class="t" style="left:604.80px;top:546px;font-size:11.6px;line-height:19px;color:#5e5e5e;letter-spacing:0.064px;">Position</span>
<span class="t" style="left:315.20px;top:564px;font-size:11.6px;line-height:19px;color:#5e5e5e;letter-spacing:-0.025px;">Bezeichnung</span>
<span class="t" style="left:451.80px;top:564px;font-size:11.6px;line-height:19px;color:#6e6e6e;font-weight:700;letter-spacing:0.110px;">Elektro-Konstruktion</span>
<span class="t" style="left:604.80px;top:564px;font-size:11.6px;line-height:19px;color:#5e5e5e;letter-spacing:-0.026px;">Terminart</span>
<span class="t" style="left:735.60px;top:564px;font-size:11.6px;line-height:19px;color:#6e6e6e;font-weight:700;letter-spacing:0.103px;">KI Elektro-Konstruktion</span>
<span class="t" style="left:315.20px;top:582px;font-size:11.6px;line-height:19px;color:#5e5e5e;letter-spacing:-0.034px;">Kostenstelle</span>
<span class="t" style="left:451.80px;top:582px;font-size:11.6px;line-height:19px;color:#6e6e6e;font-weight:700;letter-spacing:-0.226px;width:149px;overflow:hidden;">310 Elektrische Konstruktion</span>
<span class="t" style="left:604.80px;top:582px;font-size:11.6px;line-height:19px;color:#5e5e5e;letter-spacing:-0.235px;">Status</span>
<span class="t" style="left:735.60px;top:582px;font-size:11.6px;line-height:19px;color:#6e6e6e;font-weight:700;letter-spacing:0.170px;">700 Dispofreigabe</span>
<span class="t" style="left:315.20px;top:600px;font-size:11.6px;line-height:19px;color:#5e5e5e;letter-spacing:0.173px;">Zuständig (intern)</span>
<span class="t" style="left:604.80px;top:600px;font-size:11.6px;line-height:19px;color:#5e5e5e;letter-spacing:0.093px;">extern</span>
<div style="left:315px;top:623px;width:576px;height:1px;background:#d6d6d6;"></div>
<span class="t" style="left:315.20px;top:627px;font-size:11.6px;line-height:19px;color:#5e5e5e;letter-spacing:-0.079px;">Beginn (Plan)</span>
<span class="t" style="left:451.80px;top:627px;font-size:11.6px;line-height:19px;color:#6e6e6e;font-weight:700;letter-spacing:0.311px;">25.06.2021 (KW 25)</span>
<span class="t" style="left:604.80px;top:627px;font-size:11.6px;line-height:19px;color:#5e5e5e;letter-spacing:-0.223px;">Ende (Plan)</span>
<span class="t" style="left:735.60px;top:627px;font-size:11.6px;line-height:19px;color:#6e6e6e;font-weight:700;letter-spacing:0.323px;">08.07.2021 (KW 27)</span>
<span class="t" style="left:315.20px;top:645px;font-size:11.6px;line-height:19px;color:#5e5e5e;letter-spacing:-0.027px;">Beginn (Ist)</span>
<span class="t" style="left:604.80px;top:645px;font-size:11.6px;line-height:19px;color:#5e5e5e;letter-spacing:-0.207px;">Ende (Ist)</span>
<span class="t" style="left:315.20px;top:663px;font-size:11.6px;line-height:19px;color:#5e5e5e;letter-spacing:-0.136px;">Beginn (Fix)</span>
<span class="t" style="left:604.80px;top:663px;font-size:11.6px;line-height:19px;color:#5e5e5e;letter-spacing:-0.365px;">Ende (Fix)</span>
<div style="left:315px;top:686px;width:576px;height:1px;background:#d6d6d6;"></div>
<span class="t" style="left:315.20px;top:690px;font-size:11.6px;line-height:19px;color:#5e5e5e;letter-spacing:-0.062px;">Bedarf (h)</span>
<span class="t" style="left:604.80px;top:690px;font-size:11.6px;line-height:19px;color:#5e5e5e;letter-spacing:0.038px;">Eingeplanter Bedarf (h)</span>
<span class="t" style="left:315.20px;top:708px;font-size:11.6px;line-height:19px;color:#5e5e5e;letter-spacing:-0.055px;">Bedarf pro Tag (h)</span>
<span class="t" style="left:604.80px;top:708px;font-size:11.6px;line-height:19px;color:#5e5e5e;letter-spacing:0.215px;">ganztägig</span>
<div style="left:734.5px;top:711px;width:14px;height:14px;background:#fff;border:1px solid #cdcdcd;"></div>
<span class="t" style="left:315.20px;top:726px;font-size:11.6px;line-height:19px;color:#5e5e5e;letter-spacing:-0.067px;">Bedarf-Fix (h)</span>
<span class="t" style="left:604.80px;top:744px;font-size:11.6px;line-height:19px;color:#5e5e5e;letter-spacing:0.082px;">Simulativ</span>
<div style="left:734.5px;top:747px;width:14px;height:14px;background:#fff;border:1px solid #cdcdcd;"></div>
<span class="t" style="left:315.20px;top:762px;font-size:11.6px;line-height:19px;color:#5e5e5e;letter-spacing:-0.161px;">Bedarf-FP (h)</span>
<span class="t" style="left:451.80px;top:762px;font-size:11.6px;line-height:19px;color:#6e6e6e;font-weight:700;letter-spacing:-0.053px;">0</span>
<span class="t" style="left:604.80px;top:762px;font-size:11.6px;line-height:19px;color:#5e5e5e;letter-spacing:-0.003px;">Ist Stunden (h)</span>
<span class="t" style="left:735.60px;top:762px;font-size:11.6px;line-height:19px;color:#6e6e6e;font-weight:700;letter-spacing:-0.053px;">0</span>
<span class="t" style="left:315.20px;top:780px;font-size:11.6px;line-height:19px;color:#5e5e5e;letter-spacing:0.054px;">Fortschritt (kalk.)</span>
<span class="t" style="left:451.80px;top:780px;font-size:11.6px;line-height:19px;color:#6e6e6e;font-weight:700;letter-spacing:-0.053px;">0</span>
<span class="t" style="left:604.80px;top:780px;font-size:11.6px;line-height:19px;color:#5e5e5e;letter-spacing:0.068px;">Fortschritt (man.)</span>
<div style="left:315px;top:803px;width:576px;height:1px;background:#d6d6d6;"></div>
<span class="t" style="left:315.20px;top:807px;font-size:11.6px;line-height:19px;color:#5e5e5e;letter-spacing:-0.067px;">Verteilzeit (T)</span>
<span class="t" style="left:451.80px;top:807px;font-size:11.6px;line-height:19px;color:#6e6e6e;font-weight:700;letter-spacing:0.294px;">10</span>
<span class="t" style="left:604.80px;top:807px;font-size:11.6px;line-height:19px;color:#5e5e5e;letter-spacing:-0.035px;">Differenz (T)</span>
<span class="t" style="left:735.60px;top:807px;font-size:11.6px;line-height:19px;color:#6e6e6e;letter-spacing:0.887px;">-5</span>
<span class="t" style="left:315.20px;top:825px;font-size:11.6px;line-height:19px;color:#5e5e5e;letter-spacing:0.135px;">Ziel Arbeitsgang</span>
<span class="t" style="left:604.80px;top:825px;font-size:11.6px;line-height:19px;color:#5e5e5e;letter-spacing:0.436px;">Art</span>
<span class="t" style="left:735.60px;top:825px;font-size:11.6px;line-height:19px;color:#6e6e6e;font-weight:700;letter-spacing:0.489px;">Normal</span>
<div style="left:315px;top:848px;width:576px;height:1px;background:#d6d6d6;"></div>
<span class="t" style="left:315.20px;top:852px;font-size:11.6px;line-height:19px;color:#5e5e5e;letter-spacing:-0.036px;">Verplante Termine</span>
<span class="t" style="left:451.80px;top:852px;font-size:11.6px;line-height:19px;color:#6e6e6e;font-weight:700;letter-spacing:-0.053px;">0</span>
<span class="t" style="left:604.80px;top:852px;font-size:11.6px;line-height:19px;color:#5e5e5e;letter-spacing:-0.262px;">Bedarf-PEP (h)</span>
<span class="t" style="left:735.60px;top:852px;font-size:11.6px;line-height:19px;color:#6e6e6e;font-weight:700;letter-spacing:-0.053px;">0</span>
<div style="left:315px;top:875px;width:576px;height:1px;background:#d6d6d6;"></div>
<span class="t" style="left:315.20px;top:879px;font-size:11.6px;line-height:19px;color:#5e5e5e;letter-spacing:-0.410px;">Erfasser</span>
<span class="t" style="left:451.80px;top:879px;font-size:11.6px;line-height:19px;color:#6e6e6e;font-weight:700;letter-spacing:-0.649px;">SIVAS</span>
<span class="t" style="left:604.80px;top:879px;font-size:11.6px;line-height:19px;color:#5e5e5e;letter-spacing:-0.109px;">Erfassdatum</span>
<span class="t" style="left:735.60px;top:879px;font-size:11.6px;line-height:19px;color:#6e6e6e;font-weight:700;letter-spacing:0.374px;">23.03.2021</span>
<span class="t" style="left:315.20px;top:897px;font-size:11.6px;line-height:19px;color:#5e5e5e;letter-spacing:0.063px;">Bemerkung</span>
<span class="t" style="left:315.20px;top:935px;font-size:11.6px;line-height:19px;color:#5e5e5e;letter-spacing:0.139px;">Stichwort</span>
<span class="t" style="left:451.80px;top:935px;font-size:11.6px;line-height:19px;color:#6e6e6e;font-weight:700;letter-spacing:0.215px;">Umbau Meisenacker IAB/2021</span>
<span class="t" style="left:315.20px;top:953px;font-size:11.6px;line-height:19px;color:#5e5e5e;letter-spacing:0.108px;">Erf. Qualifikationen</span>
<div style="left:3px;top:1019px;width:1850px;height:20px;background:#fdfdfd;"></div>
<div style="left:106px;top:1023px;width:15px;height:15px;background:#fff;border:1px solid #b4b4b4;"></div>
<svg style="left:111px;top:1027.3px" width="8" height="8" viewBox="0 0 8 8" ><polygon points="4.2,0 4.2,6.6 0,3.3" fill="#3a3a3a"/></svg>
<div style="left:120px;top:1023px;width:42px;height:15px;background:#fff;border:1px solid #b4b4b4;"></div>
<div style="left:526px;top:1023px;width:12px;height:15px;background:#fff;border:1px solid #b4b4b4;border-right:none;"></div>
<svg style="left:531.6px;top:1027.3px" width="8" height="8" viewBox="0 0 8 8" ><polygon points="0,0 0,6.6 4.2,3.3" fill="#3a3a3a"/></svg>
<div style="left:538px;top:1000px;width:3px;height:39px;background:#eeeeee;"></div>
<div style="left:543px;top:1023px;width:15px;height:15px;background:#fff;border:1px solid #b4b4b4;"></div>
<svg style="left:548px;top:1027.3px" width="8" height="8" viewBox="0 0 8 8" ><polygon points="4.2,0 4.2,6.6 0,3.3" fill="#3a3a3a"/></svg>
<div style="left:886px;top:1023px;width:169px;height:15px;background:#fff;border:1px solid #b4b4b4;"></div>
<div style="left:1837px;top:1023px;width:15px;height:15px;background:#fff;border:1px solid #b4b4b4;"></div>
<svg style="left:1843px;top:1027.3px" width="8" height="8" viewBox="0 0 8 8" ><polygon points="0,0 0,6.6 4.2,3.3" fill="#3a3a3a"/></svg>
<div style="left:1854.3px;top:231px;width:14.6px;height:14.6px;background:#fff;border:1px solid #e4e4e4;"></div>
<svg style="left:1858.4px;top:236.2px" width="8" height="8" viewBox="0 0 8 8" ><polygon points="0,3.6 6.6,3.6 3.3,0" fill="#3a3a3a"/></svg>
<div style="left:1854.3px;top:1006px;width:14.6px;height:14.6px;background:#fff;border:1px solid #e4e4e4;"></div>
<svg style="left:1858.4px;top:1011.6px" width="8" height="8" viewBox="0 0 8 8" ><polygon points="0,0 6.6,0 3.3,3.6" fill="#3a3a3a"/></svg>
<div style="left:1871px;top:183px;width:46px;height:856px;background:#3b3b3d;"></div>
<svg style="left:1882px;top:193px" width="24" height="22" viewBox="0 0 24 22" ><g fill="none" stroke="#929294" stroke-width="1.55"><path d="M2.7 2.7 H21.3 V16.6 H14.4 L12 19 L9.6 16.6 H2.7 Z"/><path d="M6.6 6.8 H17.2 M6.6 10 H17.2 M6.6 13.1 H14.2" stroke-width="1.2"/></g></svg>
<svg style="left:1884px;top:233px" width="20" height="20" viewBox="0 0 20 20" ><g fill="none" stroke="#929294" stroke-width="1.55"><path d="M2.3 11.4 L4.4 2.6 H15.6 L17.7 11.4 V17.6 H2.3 Z"/><path d="M2.3 11.4 H7.2 Q7.2 14 10 14 Q12.8 14 12.8 11.4 H17.7"/></g></svg>
<svg style="left:1883px;top:271px" width="22" height="24" viewBox="0 0 22 24" ><g fill="none" stroke="#929294" stroke-width="1.55"><circle cx="17" cy="5" r="2.2"/><circle cx="4.6" cy="12" r="2.2"/><circle cx="17" cy="19" r="2.2"/><path d="M6.6 10.9 L15 6.1 M6.6 13.1 L15 17.9"/></g></svg>
<svg style="left:1884px;top:1008px" width="22" height="24" viewBox="0 0 22 24" ><g fill="none" stroke="#fff" stroke-width="1.6"><path d="M4.2 17.5 V4 H13"/><path d="M16.6 12 V18.6"/></g><path d="M1.6 17 H17.4 V19 Q17.4 21.2 15.2 21.2 H3.8 Q1.6 21.2 1.6 19 Z" fill="#fff"/></svg>
<div style="left:1896px;top:1001px;width:15.2px;height:18px;background:#e2001a;"></div>
<span class="t" style="left:1898.90px;top:1004px;font-size:9.2px;line-height:15px;color:#fff;font-weight:700;letter-spacing:-0.834px;">10</span>
</div></body></html>
